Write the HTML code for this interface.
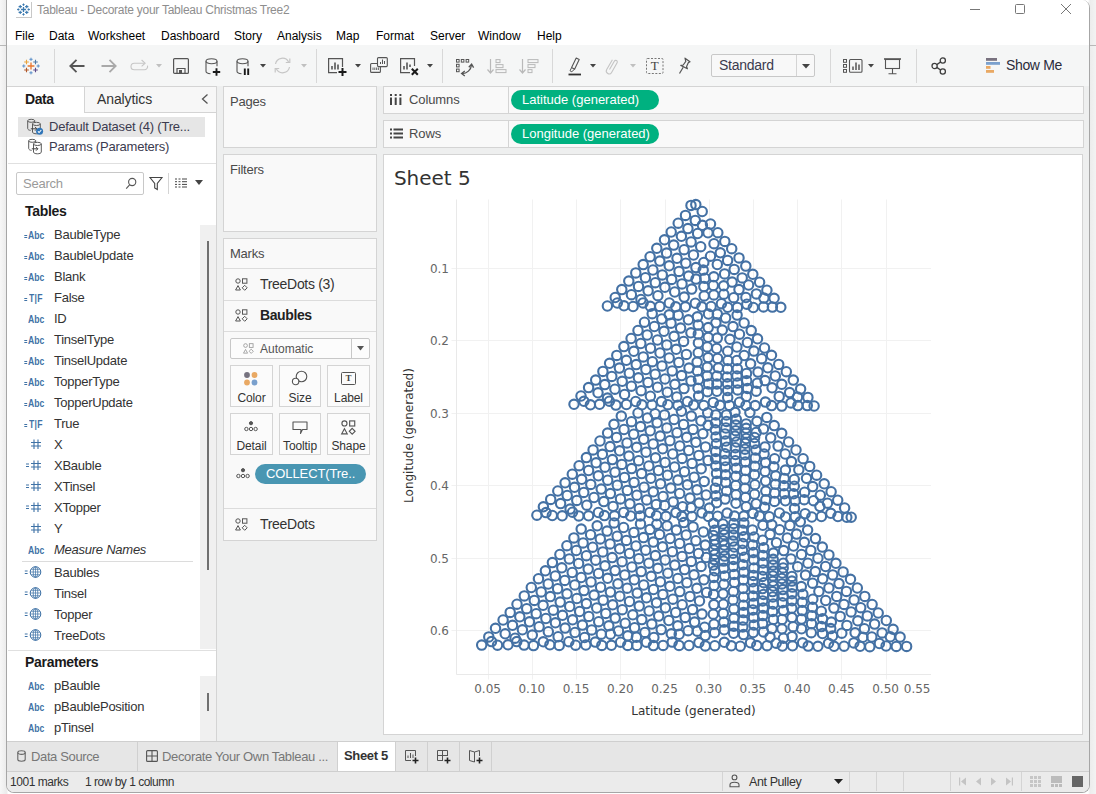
<!DOCTYPE html>
<html><head><meta charset="utf-8"><title>Tableau - Decorate your Tableau Christmas Tree2</title>
<style>
*{box-sizing:border-box;margin:0;padding:0}
html,body{width:1096px;height:794px;overflow:hidden}
body{background:linear-gradient(90deg,#f7f7f7 0,#ececec 6px,#ececec 7px,#fff 8px,#fff 1088px,#ececec 1090px,#f3f3f3 1096px);font-family:"Liberation Sans",sans-serif;font-size:13px;color:#333;position:relative}
#win{position:absolute;left:6px;top:0;width:1084px;height:793px;background:#fff;border:1px solid #a6a6a6;border-top:none;border-radius:0 8px 8px 8px;overflow:hidden}
#o{position:absolute;left:-7px;top:0;width:1096px;height:794px}
#o div,#o span{position:absolute;white-space:nowrap}
svg{position:absolute;overflow:visible}
.t{font-size:13px;color:#333;line-height:16px;letter-spacing:-.22px}
.card{background:#f9f9f9;border:1px solid #d4d4d4}
.f{font-size:13px;color:#333;line-height:16px;left:54px;letter-spacing:-.25px}
.ic{font-size:10.5px;font-weight:bold;color:#3f72a6;line-height:13px;transform:scaleX(.82);transform-origin:0 0}
</style></head><body>
<div style="position:absolute;left:0;top:45px;width:6px;height:1px;background:#b8b8b8"></div><div style="position:absolute;left:1090px;top:45px;width:6px;height:1px;background:#b8b8b8"></div>
<div id="win"><div id="o">
<!-- title + menu -->
<div style="left:7px;top:0;width:1082px;height:45px;background:#fff"></div>
<div style="left:37px;top:2px;font-size:12px;color:#8e8e8e;line-height:16px;letter-spacing:-.26px">Tableau - Decorate your Tableau Christmas Tree2</div>
<div style="left:16px;top:2px;width:16px;height:16px;background:#fff;border-right:1px solid #c8c8c8;border-bottom:1px solid #c8c8c8"></div>
<svg style="left:17px;top:3px" width="13" height="13" viewBox="0 0 13 13" fill="none"><path d="M6.5 4.04444v4.91111M4.04444 6.5h4.91111" stroke="#3c7ab0" stroke-width="1.3"/><path d="M3.25 1.95v3.32222M1.58889 3.61111h3.32222" stroke="#3c7ab0" stroke-width="1.1"/><path d="M9.75 1.95v3.32222M8.08889 3.61111h3.32222" stroke="#3c7ab0" stroke-width="1.1"/><path d="M3.25 7.72778v3.32222M1.58889 9.38889h3.32222" stroke="#3c7ab0" stroke-width="1.1"/><path d="M9.75 7.72778v3.32222M8.08889 9.38889h3.32222" stroke="#3c7ab0" stroke-width="1.1"/><path d="M6.5 0.505556v2.31111M5.34444 1.66111h2.31111" stroke="#3c7ab0" stroke-width="1"/><path d="M6.5 10.2556v2.31111M5.34444 11.4111h2.31111" stroke="#3c7ab0" stroke-width="1"/><path d="M1.3 5.34444v2.31111M0.144444 6.5h2.31111" stroke="#3c7ab0" stroke-width="1"/><path d="M11.7 5.34444v2.31111M10.5444 6.5h2.31111" stroke="#3c7ab0" stroke-width="1"/></svg>
<svg style="left:969px;top:4px" width="12" height="12" viewBox="0 0 12 12" ><path d="M1 5.500h10" stroke="#777" stroke-width="1"/></svg>
<svg style="left:1014px;top:3px" width="12" height="12" viewBox="0 0 12 12" ><rect x="1.500" y="1.500" width="9" height="9" rx="1" fill="none" stroke="#777" stroke-width="1"/></svg>
<svg style="left:1060px;top:3px" width="12" height="12" viewBox="0 0 12 12" ><path d="M1 1l10 10M11 1L1 11" stroke="#777" stroke-width="1"/></svg>
<div id="menu" style="left:0;top:28px;font-size:12px;color:#000;line-height:16px">
<span style="left:15px">File</span><span style="left:49px">Data</span><span style="left:88px">Worksheet</span><span style="left:161px">Dashboard</span><span style="left:234px">Story</span><span style="left:277px">Analysis</span><span style="left:336px">Map</span><span style="left:376px">Format</span><span style="left:430px">Server</span><span style="left:478px">Window</span><span style="left:537px">Help</span>
</div>
<!-- toolbar -->
<div style="left:7px;top:45px;width:1082px;height:41px;background:#f5f6f6"></div>
<svg style="left:21.5px;top:56.5px" width="18" height="18" viewBox="0 0 18 18" fill="none"><path d="M9 5.6v6.8M5.6 9h6.8" stroke="#e8762d" stroke-width="1.3"/><path d="M4.5 2.7v4.6M2.2 5h4.6" stroke="#e8a33d" stroke-width="1.1"/><path d="M13.5 2.7v4.6M11.2 5h4.6" stroke="#4e79a7" stroke-width="1.1"/><path d="M4.5 10.7v4.6M2.2 13h4.6" stroke="#b0582a" stroke-width="1.1"/><path d="M13.5 10.7v4.6M11.2 13h4.6" stroke="#5c4a8a" stroke-width="1.1"/><path d="M9 0.7v3.2M7.4 2.3h3.2" stroke="#5b8fc9" stroke-width="1"/><path d="M9 14.2v3.2M7.4 15.8h3.2" stroke="#5b8fc9" stroke-width="1"/><path d="M1.8 7.4v3.2M0.2 9h3.2" stroke="#5b8fc9" stroke-width="1"/><path d="M16.2 7.4v3.2M14.6 9h3.2" stroke="#5b8fc9" stroke-width="1"/></svg>
<div style="left:54px;top:49px;width:1px;height:34px;background:#d8d8d8"></div>
<div style="left:316px;top:49px;width:1px;height:34px;background:#d8d8d8"></div>
<div style="left:442px;top:49px;width:1px;height:34px;background:#d8d8d8"></div>
<div style="left:552px;top:49px;width:1px;height:34px;background:#d8d8d8"></div>
<div style="left:830px;top:49px;width:1px;height:34px;background:#d8d8d8"></div>
<div style="left:916px;top:49px;width:1px;height:34px;background:#d8d8d8"></div>
<svg style="left:68px;top:58px" width="18" height="16" viewBox="0 0 18 16" ><path d="M16.500 8H2.500M8.500 1.800L2.300 8l6.200 6.200" stroke="#555" stroke-width="1.800" fill="none"/></svg>
<svg style="left:100px;top:58px" width="18" height="16" viewBox="0 0 18 16" ><path d="M1.500 8h14M9.500 1.800L15.700 8l-6.200 6.200" stroke="#a9a9a9" stroke-width="1.800" fill="none"/></svg>
<svg style="left:129px;top:58px" width="20" height="12" viewBox="0 0 20 12" ><path d="M15 5.200H5.300a3.300 3.300 0 0 0 0 6.600h10a3.300 3.300 0 0 0 3.200-4.200" stroke="#c6c6c6" stroke-width="1.100" fill="none"/><path d="M12.600 2l3.500 3.200-3.500 3.200" stroke="#c6c6c6" stroke-width="1.100" fill="none"/></svg>
<svg style="left:156px;top:64px" width="6" height="4" viewBox="0 0 6 4" ><path d="M0 0h6L3 3.600z" fill="#c0c0c0"/></svg>
<svg style="left:173px;top:58px" width="16" height="16" viewBox="0 0 16 16" ><rect x=".6" y=".6" width="14.800" height="14.800" rx="1" fill="none" stroke="#555" stroke-width="1.200"/><path d="M4 15.400V10.500h8v4.900" fill="none" stroke="#555" stroke-width="1.200"/><rect x="6" y="12" width="3" height="3.400" fill="#555"/></svg>
<svg style="left:205px;top:58px" width="18" height="19" viewBox="0 0 18 19" ><ellipse cx="6.500" cy="3.200" rx="5.500" ry="2.500" fill="none" stroke="#555" stroke-width="1.100"/><path d="M1 3.200v10c0 1.300 2 2.300 4.500 2.500M12 3.200v5" fill="none" stroke="#555" stroke-width="1.100"/><path d="M11.5 10.3v7.4M7.8 14h7.4" stroke="#1a1a1a" stroke-width="1.9" fill="none"/></svg>
<svg style="left:236px;top:58px" width="18" height="19" viewBox="0 0 18 19" ><ellipse cx="6.500" cy="3.200" rx="5.500" ry="2.500" fill="none" stroke="#555" stroke-width="1.100"/><path d="M1 3.200v10c0 1.300 2 2.300 4.500 2.500M12 3.200v5" fill="none" stroke="#555" stroke-width="1.100"/><path d="M8.800 10.500v6.500M12.200 10.500v6.500" stroke="#1a1a1a" stroke-width="1.900"/></svg>
<svg style="left:260px;top:64px" width="6" height="4" viewBox="0 0 6 4" ><path d="M0 0h6L3 3.600z" fill="#444"/></svg>
<svg style="left:273px;top:56px" width="19" height="19" viewBox="0 0 19 19" ><path d="M2.500 8A7 7 0 0 1 15.600 6M16.500 11A7 7 0 0 1 3.400 13" fill="none" stroke="#c6c6c6" stroke-width="1.200"/><path d="M16.800 2.500v4h-4M2.200 16.500v-4h4" fill="none" stroke="#c6c6c6" stroke-width="1.200"/></svg>
<svg style="left:300.5px;top:64px" width="6" height="4" viewBox="0 0 6 4" ><path d="M0 0h6L3 3.600z" fill="#c0c0c0"/></svg>
<svg style="left:328px;top:58px" width="20" height="19" viewBox="0 0 20 19" ><path d="M14.500 9V.6H.6v14H9" fill="none" stroke="#555" stroke-width="1.200"/><path d="M4 11.500V8M7 11.500V4.500M10 11.500V6.500" stroke="#555" stroke-width="1.600"/><path d="M14.5 10v8M10.5 14h8" stroke="#1a1a1a" stroke-width="2" fill="none"/></svg>
<svg style="left:354.5px;top:64px" width="6" height="4" viewBox="0 0 6 4" ><path d="M0 0h6L3 3.600z" fill="#444"/></svg>
<svg style="left:370px;top:57px" width="18" height="17" viewBox="0 0 18 17" ><rect x="7.500" y=".6" width="9.800" height="9" rx="1" fill="#f5f6f6" stroke="#555" stroke-width="1.100"/><path d="M10.500 7V5M12.500 7V2.500M14.500 7V4" stroke="#555" stroke-width="1"/><path d="M7.500 6.500H1.600a1 1 0 0 0-1 1V14.400a1 1 0 0 0 1 1H9.400a1 1 0 0 0 1-1V9.600" fill="none" stroke="#555" stroke-width="1.100"/><path d="M3 13v-2.500M4.800 13v-2.500M6.600 13v-2.500M8.400 13v-2.500" stroke="#555" stroke-width=".9"/></svg>
<svg style="left:400px;top:58px" width="20" height="19" viewBox="0 0 20 19" ><path d="M14.500 8V.6H.6v14H10" fill="none" stroke="#555" stroke-width="1.200"/><path d="M4 11.500V8M7 11.500V4.500M10 9V6.500" stroke="#555" stroke-width="1.600"/><path d="M11.800 10.800l6 6M17.800 10.800l-6 6" stroke="#1a1a1a" stroke-width="2"/></svg>
<svg style="left:426.5px;top:64px" width="6" height="4" viewBox="0 0 6 4" ><path d="M0 0h6L3 3.600z" fill="#444"/></svg>
<svg style="left:455.5px;top:59px" width="18" height="17" viewBox="0 0 18 17" ><rect x="0.5" y="0.5" width="2.600" height="2.600" fill="none" stroke="#555" stroke-width="1"/><rect x="5.3" y="0.5" width="2.600" height="2.600" fill="none" stroke="#555" stroke-width="1"/><rect x="10.1" y="0.5" width="2.600" height="2.600" fill="none" stroke="#555" stroke-width="1"/><rect x="0.5" y="5.3" width="2.600" height="2.600" fill="none" stroke="#555" stroke-width="1"/><rect x="0.5" y="10.1" width="2.600" height="2.600" fill="none" stroke="#555" stroke-width="1"/><path d="M6 14.500c5 0 9-3.500 9.500-8.500" fill="none" stroke="#555" stroke-width="1.300"/><path d="M12.800 8.200L15.600 5.200l2 3.400M8.800 12l-3.200 2.500 3.200 2.400" fill="none" stroke="#555" stroke-width="1.300"/></svg>
<svg style="left:487px;top:59px" width="20" height="16" viewBox="0 0 20 16" ><path d="M3.500 0v14M.5 10.500l3 3.500 3-3.500" fill="none" stroke="#b9b9b9" stroke-width="1.200"/><rect x="9" y=".6" width="4" height="3" fill="none" stroke="#b9b9b9"/><rect x="9" y="5.600" width="7" height="3" fill="none" stroke="#b9b9b9"/><rect x="9" y="10.600" width="10" height="3" fill="none" stroke="#b9b9b9"/></svg>
<svg style="left:519px;top:59px" width="20" height="16" viewBox="0 0 20 16" ><path d="M3.500 0v14M.5 10.500l3 3.500 3-3.500" fill="none" stroke="#b9b9b9" stroke-width="1.200"/><rect x="9" y=".6" width="10" height="3" fill="none" stroke="#b9b9b9"/><rect x="9" y="5.600" width="7" height="3" fill="none" stroke="#b9b9b9"/><rect x="9" y="10.600" width="4" height="3" fill="none" stroke="#b9b9b9"/></svg>
<svg style="left:568px;top:57px" width="14" height="19" viewBox="0 0 14 19" ><path d="M8.200 1l3 1.600-4.600 9.600-3-1.600z" fill="none" stroke="#555" stroke-width="1.100" stroke-linejoin="round"/><path d="M3.600 10.600l-1.600 3.200 1.800 .9 2.800-2.500" fill="none" stroke="#555" stroke-width="1"/><path d="M.5 17.500h12.500" stroke="#333" stroke-width="1.800"/></svg>
<svg style="left:589.5px;top:64px" width="6" height="4" viewBox="0 0 6 4" ><path d="M0 0h6L3 3.600z" fill="#444"/></svg>
<svg style="left:605px;top:57px" width="15" height="18" viewBox="0 0 15 18" ><path d="M4.500 12.500l4.800-8.300a1.600 1.600 0 0 1 2.800 1.600l-5.500 9.600a2.800 2.800 0 0 1-4.900-2.800l5.700-9.800" fill="none" stroke="#c4c4c4" stroke-width="1.100"/></svg>
<svg style="left:629.5px;top:64px" width="6" height="4" viewBox="0 0 6 4" ><path d="M0 0h6L3 3.600z" fill="#c0c0c0"/></svg>
<svg style="left:646px;top:57.5px" width="18" height="16" viewBox="0 0 18 16" ><rect x=".5" y=".5" width="16.500" height="15" rx="1" fill="none" stroke="#777" stroke-width="1" stroke-dasharray="2 1.500"/></svg>
<div style="left:646px;top:58px;width:17.500px;text-align:center;font-family:'Liberation Serif',serif;font-size:13px;line-height:16px;color:#444">T</div>
<svg style="left:677px;top:57px" width="15" height="19" viewBox="0 0 15 19" ><path d="M8 1.200l5 3.600-1.600 .8-1.800 4 .8 2.200-6.600-3.400 2.400-.4 2.600-3.600z" fill="none" stroke="#555" stroke-width="1.200" stroke-linejoin="round"/><path d="M6.200 10.200L2.500 16.500" stroke="#555" stroke-width="1.200"/></svg>
<div style="left:711px;top:54px;width:104px;height:23px;background:#f8f8f8;border:1px solid #c8c8c8;border-radius:2px"></div>
<div style="left:796px;top:55px;width:1px;height:21px;background:#d4d4d4"></div>
<div style="left:719px;top:57px;font-size:14px;line-height:17px;color:#3b3b4f;letter-spacing:-.25px">Standard</div>
<svg style="left:801.5px;top:63.5px" width="8" height="5" viewBox="0 0 8 5" ><path d="M0 0h8L4 4.600z" fill="#444"/></svg>
<svg style="left:843px;top:59px" width="20" height="14" viewBox="0 0 20 14" ><rect x=".5" y=".5" width="3" height="2.800" fill="none" stroke="#555"/><rect x=".5" y="5.500" width="3" height="2.800" fill="none" stroke="#555"/><rect x=".5" y="10.500" width="3" height="2.800" fill="none" stroke="#555"/><rect x="6.500" y=".5" width="12.500" height="12.800" rx="1" fill="none" stroke="#555" stroke-width="1.100"/><path d="M10 11V7.500M13 11V3.500M16 11V5.500" stroke="#555" stroke-width="1.500"/></svg>
<svg style="left:867.5px;top:64px" width="6" height="4" viewBox="0 0 6 4" ><path d="M0 0h6L3 3.600z" fill="#444"/></svg>
<svg style="left:884px;top:58px" width="17" height="17" viewBox="0 0 17 17" ><path d="M0 1h17" stroke="#555" stroke-width="1.600"/><rect x="1.500" y="1.500" width="14" height="9" fill="none" stroke="#555" stroke-width="1.100"/><path d="M8.500 10.500v5M4.500 15.800h8" stroke="#555" stroke-width="1.100"/></svg>
<svg style="left:931px;top:57px" width="16" height="18" viewBox="0 0 16 18" ><circle cx="11.800" cy="3.500" r="2.600" fill="none" stroke="#3d3d3d" stroke-width="1.300"/><circle cx="3.600" cy="9" r="2.600" fill="none" stroke="#3d3d3d" stroke-width="1.300"/><circle cx="11.800" cy="14.500" r="2.600" fill="none" stroke="#3d3d3d" stroke-width="1.300"/><path d="M5.800 7.600l3.800-2.600M5.800 10.400l3.800 2.600" stroke="#3d3d3d" stroke-width="1.300"/></svg>
<svg style="left:986px;top:58px" width="15" height="15" viewBox="0 0 15 15" ><rect x="0" y="0" width="11" height="2.800" fill="#79727f"/><rect x="0" y="4" width="14" height="2.800" fill="#7aa0cd"/><rect x="0" y="8" width="4.500" height="2.800" fill="#e9a964"/><rect x="0" y="12" width="8" height="2.800" fill="#e9a964"/></svg>
<div style="left:1006px;top:57px;font-size:14px;line-height:17px;color:#2b2b3b;letter-spacing:-.35px">Show Me</div>
<!-- workspace -->
<div style="left:7px;top:86px;width:1082px;height:655px;background:#eeefef"></div>
<div style="left:7px;top:86px;width:210px;height:655px;background:#fff;border-top:1px solid #d4d4d4;border-right:1px solid #d4d4d4"></div>
<div style="left:84px;top:86px;width:133px;height:27px;background:#f7f7f7;border:1px solid #d4d4d4"></div>
<div style="left:25px;top:91px;font-size:14px;font-weight:bold;color:#1a1a1a;line-height:17px;letter-spacing:-.4px">Data</div>
<div style="left:97px;top:91px;font-size:14px;color:#333;line-height:17px;letter-spacing:-.1px">Analytics</div>
<svg style="left:200px;top:93px" width="10" height="12" viewBox="0 0 10 12" fill="none" stroke="#555" stroke-width="1.3"><path d="M7.5 1.5L2.5 6l5 4.5"/></svg>
<div style="left:18px;top:117px;width:187px;height:20px;background:#e6e6e6"></div>
<div class="t" style="left:49px;top:119px;color:#3b3b4f">Default Dataset (4) (Tre...</div>
<div class="t" style="left:49px;top:139px;color:#3b3b4f">Params (Parameters)</div>
<svg style="left:26px;top:117px" width="18" height="18" viewBox="0 0 18 18" fill="none" stroke="#5a5a5a" stroke-width="1"><ellipse cx="5.200" cy="3.800" rx="3.500" ry="1.500"/><path d="M1.700 3.800v7.700c0 1 1.200 1.700 2.900 1.900M8.700 3.800v1.400"/><ellipse cx="10.400" cy="6.900" rx="3.900" ry="1.600"/><path d="M6.500 6.900v8.200c0 1 1.800 1.700 3.900 1.700s3.900-.7 3.900-1.700V6.900"/><path d="M4.800 11.800h6M9 9.900l1.900 1.900L9 13.700" stroke="#444"/><circle cx="13.600" cy="14.200" r="3.500" fill="#2f75b8" stroke="none"/><path d="M11.900 14.300l1.200 1.200 2.200-2.500" stroke="#fff" stroke-width="1.100"/></svg>
<svg style="left:27px;top:137px" width="18" height="18" viewBox="0 0 18 18" fill="none" stroke="#5a5a5a" stroke-width="1"><ellipse cx="5.200" cy="3.800" rx="3.500" ry="1.500"/><path d="M1.700 3.800v7.700c0 1 1.200 1.700 2.900 1.900M8.700 3.800v1.400"/><ellipse cx="10.400" cy="6.900" rx="3.900" ry="1.600"/><path d="M6.500 6.900v8.200c0 1 1.800 1.700 3.900 1.700s3.900-.7 3.900-1.700V6.900"/><path d="M4.800 11.800h6M9 9.900l1.900 1.900L9 13.700" stroke="#444"/></svg>
<div style="left:8px;top:163px;width:208px;height:1px;background:#e0e0e0"></div>
<div style="left:16px;top:172px;width:128px;height:23px;background:#fff;border:1px solid #c8c8c8;border-radius:2px"></div>
<div class="t" style="left:23px;top:176px;color:#9a9a9a">Search</div>
<svg style="left:125px;top:177px" width="12" height="13" viewBox="0 0 12 13" fill="none" stroke="#555" stroke-width="1.1"><circle cx="7.2" cy="5" r="3.6"/><path d="M4.6 7.8L1.2 11.6"/></svg>
<svg style="left:149px;top:176px" width="14" height="15" viewBox="0 0 14 15" fill="none" stroke="#444" stroke-width="1.1"><path d="M1 1.5h12L8.3 7.5v6l-2.6-1.6V7.5z"/></svg>
<div style="left:168px;top:173px;width:1px;height:21px;background:#d4d4d4"></div>
<svg style="left:174px;top:178px" width="14" height="10" viewBox="0 0 14 10" fill="none" stroke="#444" stroke-width="1"><path d="M1 1h2M4.5 1h2M8 1h5M1 3.7h2M4.5 3.7h2M8 3.7h5M1 6.4h2M4.5 6.4h2M8 6.4h5M1 9h2M4.5 9h2M8 9h5"/></svg>
<svg style="left:195px;top:180px" width="8" height="5" viewBox="0 0 8 5"><path d="M0 0h8L4 5z" fill="#444"/></svg>
<div style="left:25px;top:203px;font-size:14px;font-weight:bold;color:#1a1a1a;line-height:17px;letter-spacing:-.3px">Tables</div>
<svg style="left:24px;top:234px" width="4" height="5" viewBox="0 0 4 5"><path d="M.3 1.500h2.900M.3 3.500h2.900" stroke="#3f72a6" stroke-width="1"/></svg><div class="ic" style="left:28px;top:229px">Abc</div><div class="f" style="left:54px;top:227px">BaubleType</div>
<svg style="left:24px;top:255px" width="4" height="5" viewBox="0 0 4 5"><path d="M.3 1.500h2.900M.3 3.500h2.900" stroke="#3f72a6" stroke-width="1"/></svg><div class="ic" style="left:28px;top:250px">Abc</div><div class="f" style="left:54px;top:248px">BaubleUpdate</div>
<svg style="left:24px;top:276px" width="4" height="5" viewBox="0 0 4 5"><path d="M.3 1.500h2.900M.3 3.500h2.900" stroke="#3f72a6" stroke-width="1"/></svg><div class="ic" style="left:28px;top:271px">Abc</div><div class="f" style="left:54px;top:269px">Blank</div>
<svg style="left:24px;top:297px" width="4" height="5" viewBox="0 0 4 5"><path d="M.3 1.500h2.900M.3 3.500h2.900" stroke="#3f72a6" stroke-width="1"/></svg><div class="ic" style="left:28.500px;top:292px;font-weight:bold;letter-spacing:.3px">T|F</div><div class="f" style="left:54px;top:290px">False</div>
<div class="ic" style="left:28px;top:313px">Abc</div><div class="f" style="left:54px;top:311px">ID</div>
<svg style="left:24px;top:339px" width="4" height="5" viewBox="0 0 4 5"><path d="M.3 1.500h2.900M.3 3.500h2.900" stroke="#3f72a6" stroke-width="1"/></svg><div class="ic" style="left:28px;top:334px">Abc</div><div class="f" style="left:54px;top:332px">TinselType</div>
<svg style="left:24px;top:360px" width="4" height="5" viewBox="0 0 4 5"><path d="M.3 1.500h2.900M.3 3.500h2.900" stroke="#3f72a6" stroke-width="1"/></svg><div class="ic" style="left:28px;top:355px">Abc</div><div class="f" style="left:54px;top:353px">TinselUpdate</div>
<svg style="left:24px;top:381px" width="4" height="5" viewBox="0 0 4 5"><path d="M.3 1.500h2.900M.3 3.500h2.900" stroke="#3f72a6" stroke-width="1"/></svg><div class="ic" style="left:28px;top:376px">Abc</div><div class="f" style="left:54px;top:374px">TopperType</div>
<svg style="left:24px;top:402px" width="4" height="5" viewBox="0 0 4 5"><path d="M.3 1.500h2.900M.3 3.500h2.900" stroke="#3f72a6" stroke-width="1"/></svg><div class="ic" style="left:28px;top:397px">Abc</div><div class="f" style="left:54px;top:395px">TopperUpdate</div>
<svg style="left:24px;top:423px" width="4" height="5" viewBox="0 0 4 5"><path d="M.3 1.500h2.900M.3 3.500h2.900" stroke="#3f72a6" stroke-width="1"/></svg><div class="ic" style="left:28.500px;top:418px;font-weight:bold;letter-spacing:.3px">T|F</div><div class="f" style="left:54px;top:416px">True</div>
<svg style="left:24px;top:438px" width="20" height="12" viewBox="0 0 20 12" fill="none" stroke="#3f72a6" stroke-width="1.1"><path d="M10 1.5v9.5M14 1.5v9.5M7 4.5h10M7 8h10"/></svg><div class="f" style="left:54px;top:437px">X</div>
<svg style="left:24px;top:459px" width="20" height="12" viewBox="0 0 20 12" fill="none" stroke="#3f72a6" stroke-width="1.1"><path d="M2 5h3M2 7.5h3" stroke-width="1"/><path d="M10 1.5v9.5M14 1.5v9.5M7 4.5h10M7 8h10"/></svg><div class="f" style="left:54px;top:458px">XBauble</div>
<svg style="left:24px;top:480px" width="20" height="12" viewBox="0 0 20 12" fill="none" stroke="#3f72a6" stroke-width="1.1"><path d="M2 5h3M2 7.5h3" stroke-width="1"/><path d="M10 1.5v9.5M14 1.5v9.5M7 4.5h10M7 8h10"/></svg><div class="f" style="left:54px;top:479px">XTinsel</div>
<svg style="left:24px;top:501px" width="20" height="12" viewBox="0 0 20 12" fill="none" stroke="#3f72a6" stroke-width="1.1"><path d="M2 5h3M2 7.5h3" stroke-width="1"/><path d="M10 1.5v9.5M14 1.5v9.5M7 4.5h10M7 8h10"/></svg><div class="f" style="left:54px;top:500px">XTopper</div>
<svg style="left:24px;top:522px" width="20" height="12" viewBox="0 0 20 12" fill="none" stroke="#3f72a6" stroke-width="1.1"><path d="M10 1.5v9.5M14 1.5v9.5M7 4.5h10M7 8h10"/></svg><div class="f" style="left:54px;top:521px">Y</div>
<div class="ic" style="left:28px;top:544px">Abc</div><div class="f" style="font-style:italic;left:54px;top:542px">Measure Names</div>
<div style="left:22px;top:561px;width:171px;height:1px;background:#dcdcdc"></div>
<svg style="left:24px;top:565px" width="20" height="14" viewBox="0 0 20 14" fill="none" stroke="#3f72a6" stroke-width="1"><path d="M.8 6h2.800M.8 8.500h2.800"/><circle cx="11.500" cy="7" r="5.300"/><ellipse cx="11.500" cy="7" rx="2.300" ry="5.300" stroke-width=".8"/><path d="M6.200 7h10.600M11.500 1.700v10.600M7.200 4.300h8.600M7.200 9.700h8.600" stroke-width=".7"/></svg><div class="f" style="left:54px;top:565px">Baubles</div>
<svg style="left:24px;top:586px" width="20" height="14" viewBox="0 0 20 14" fill="none" stroke="#3f72a6" stroke-width="1"><path d="M.8 6h2.800M.8 8.500h2.800"/><circle cx="11.500" cy="7" r="5.300"/><ellipse cx="11.500" cy="7" rx="2.300" ry="5.300" stroke-width=".8"/><path d="M6.200 7h10.600M11.500 1.700v10.600M7.200 4.300h8.600M7.200 9.700h8.600" stroke-width=".7"/></svg><div class="f" style="left:54px;top:586px">Tinsel</div>
<svg style="left:24px;top:607px" width="20" height="14" viewBox="0 0 20 14" fill="none" stroke="#3f72a6" stroke-width="1"><path d="M.8 6h2.800M.8 8.500h2.800"/><circle cx="11.500" cy="7" r="5.300"/><ellipse cx="11.500" cy="7" rx="2.300" ry="5.300" stroke-width=".8"/><path d="M6.200 7h10.600M11.500 1.700v10.600M7.200 4.300h8.600M7.200 9.700h8.600" stroke-width=".7"/></svg><div class="f" style="left:54px;top:607px">Topper</div>
<svg style="left:24px;top:628px" width="20" height="14" viewBox="0 0 20 14" fill="none" stroke="#3f72a6" stroke-width="1"><path d="M.8 6h2.800M.8 8.500h2.800"/><circle cx="11.500" cy="7" r="5.300"/><ellipse cx="11.500" cy="7" rx="2.300" ry="5.300" stroke-width=".8"/><path d="M6.200 7h10.600M11.500 1.700v10.600M7.200 4.300h8.600M7.200 9.700h8.600" stroke-width=".7"/></svg><div class="f" style="left:54px;top:628px">TreeDots</div>
<div style="left:200px;top:225px;width:16px;height:424px;background:#f0f0f0"></div>
<div style="left:207px;top:241px;width:2px;height:329px;background:#707070"></div>
<div style="left:8px;top:650px;width:208px;height:1px;background:#e0e0e0"></div>
<div style="left:25px;top:654px;font-size:14px;font-weight:bold;color:#1a1a1a;line-height:17px;letter-spacing:-.3px">Parameters</div>
<div class="ic" style="left:28px;top:680px">Abc</div><div class="f" style="left:54px;top:678px">pBauble</div>
<div class="ic" style="left:28px;top:701px">Abc</div><div class="f" style="left:54px;top:699px">pBaublePosition</div>
<div class="ic" style="left:28px;top:722px">Abc</div><div class="f" style="left:54px;top:720px">pTinsel</div>
<div style="left:200px;top:676px;width:16px;height:65px;background:#f0f0f0"></div>
<div style="left:207px;top:693px;width:2px;height:18px;background:#707070"></div>
<div class="card" style="left:223px;top:86px;width:154px;height:62px"></div>
<div class="t" style="left:230px;top:94px;color:#4a4a4a">Pages</div>
<div class="card" style="left:223px;top:154px;width:154px;height:78px"></div>
<div class="t" style="left:230px;top:162px;color:#4a4a4a">Filters</div>
<div class="card" style="left:223px;top:238px;width:154px;height:303px"></div>
<div class="t" style="left:230px;top:246px;color:#4a4a4a">Marks</div>
<div style="left:224px;top:268px;width:152px;height:1px;background:#dcdcdc"></div>
<div style="left:224px;top:300px;width:152px;height:1px;background:#dcdcdc"></div>
<div style="left:224px;top:331px;width:152px;height:1px;background:#dcdcdc"></div>
<div style="left:224px;top:508px;width:152px;height:1px;background:#dcdcdc"></div>
<svg style="left:235px;top:278px" width="13" height="13" viewBox="0 0 13 13" fill="none" stroke="#555" stroke-width="1"><circle cx="3" cy="3" r="2.2"/><rect x="7.5" y="0.8" width="4.4" height="4.4"/><path d="M3 7.6L5.4 12H.6z"/><path d="M9.7 7.3l2.5 2.5-2.5 2.5-2.5-2.5z"/></svg>
<div class="t" style="left:260px;top:276px;font-size:14px;letter-spacing:-.3px">TreeDots (3)</div>
<svg style="left:235px;top:309px" width="13" height="13" viewBox="0 0 13 13" fill="none" stroke="#555" stroke-width="1"><circle cx="3" cy="3" r="2.2"/><rect x="7.5" y="0.8" width="4.4" height="4.4"/><path d="M3 7.6L5.4 12H.6z"/><path d="M9.7 7.3l2.5 2.5-2.5 2.5-2.5-2.5z"/></svg>
<div class="t" style="left:260px;top:307px;font-size:14px;font-weight:bold;color:#222;letter-spacing:-.4px">Baubles</div>
<svg style="left:235px;top:518px" width="13" height="13" viewBox="0 0 13 13" fill="none" stroke="#555" stroke-width="1"><circle cx="3" cy="3" r="2.2"/><rect x="7.5" y="0.8" width="4.4" height="4.4"/><path d="M3 7.6L5.4 12H.6z"/><path d="M9.7 7.3l2.5 2.5-2.5 2.5-2.5-2.5z"/></svg>
<div class="t" style="left:260px;top:516px;font-size:14px;letter-spacing:-.3px">TreeDots</div>
<div style="left:230px;top:338px;width:140px;height:21px;background:#fcfcfc;border:1px solid #c8c8c8;border-radius:2px"></div>
<div style="left:351px;top:339px;width:1px;height:19px;background:#c8c8c8"></div>
<svg style="left:243px;top:343px" width="11" height="11" viewBox="0 0 13 13" fill="none" stroke="#999" stroke-width="1"><circle cx="3" cy="3" r="2.2"/><rect x="7.5" y="0.8" width="4.4" height="4.4"/><path d="M3 7.6L5.4 12H.6z"/><path d="M9.7 7.3l2.5 2.5-2.5 2.5-2.5-2.5z"/></svg>
<div class="t" style="left:260px;top:341px;color:#555;font-size:12px;letter-spacing:0">Automatic</div>
<svg style="left:357px;top:346px" width="7" height="5" viewBox="0 0 7 5"><path d="M0 0h7L3.500 4.500z" fill="#555"/></svg>
<div style="left:230px;top:365px;width:43px;height:42px;background:#fbfbfb;border:1px solid #d4d4d4"></div>
<div class="t" style="left:230px;top:390px;width:43px;text-align:center;font-size:12px;letter-spacing:-.1px;color:#333">Color</div>
<div style="left:279px;top:365px;width:42px;height:42px;background:#fbfbfb;border:1px solid #d4d4d4"></div>
<div class="t" style="left:279px;top:390px;width:42px;text-align:center;font-size:12px;letter-spacing:-.1px;color:#333">Size</div>
<div style="left:327px;top:365px;width:43px;height:42px;background:#fbfbfb;border:1px solid #d4d4d4"></div>
<div class="t" style="left:327px;top:390px;width:43px;text-align:center;font-size:12px;letter-spacing:-.1px;color:#333">Label</div>
<div style="left:230px;top:413px;width:43px;height:42px;background:#fbfbfb;border:1px solid #d4d4d4"></div>
<div class="t" style="left:230px;top:438px;width:43px;text-align:center;font-size:12px;letter-spacing:-.1px;color:#333">Detail</div>
<div style="left:279px;top:413px;width:42px;height:42px;background:#fbfbfb;border:1px solid #d4d4d4"></div>
<div class="t" style="left:279px;top:438px;width:42px;text-align:center;font-size:12px;letter-spacing:-.1px;color:#333">Tooltip</div>
<div style="left:327px;top:413px;width:43px;height:42px;background:#fbfbfb;border:1px solid #d4d4d4"></div>
<div class="t" style="left:327px;top:438px;width:43px;text-align:center;font-size:12px;letter-spacing:-.1px;color:#333">Shape</div>
<svg style="left:243px;top:371px" width="16" height="16" viewBox="0 0 16 16"><circle cx="4" cy="4" r="2.9" fill="#76727f"/><circle cx="11.5" cy="4" r="2.9" fill="#e9a964"/><circle cx="4" cy="11.5" r="2.9" fill="#e9a964"/><circle cx="11.5" cy="11.5" r="2.9" fill="#7aa0cd"/></svg>
<svg style="left:291px;top:370px" width="18" height="17" viewBox="0 0 18 17" fill="none" stroke="#555" stroke-width="1.1"><circle cx="10.5" cy="6.5" r="5.3"/><circle cx="4.6" cy="11.5" r="3.2" fill="#fbfbfb"/></svg>
<svg style="left:341px;top:372px" width="15" height="13" viewBox="0 0 15 13" fill="none" stroke="#555" stroke-width="1"><rect x=".5" y=".5" width="14" height="12" rx="1"/></svg>
<div style="left:341px;top:372px;width:15px;text-align:center;font-family:'Liberation Serif',serif;font-size:9px;font-weight:bold;line-height:13px;color:#444">T</div>
<svg style="left:244px;top:421px" width="14" height="11" viewBox="0 0 14 11" fill="none" stroke="#555" stroke-width="1"><circle cx="7" cy="2.2" r="1.6" fill="#555"/><circle cx="2.4" cy="8" r="1.7"/><circle cx="7" cy="8" r="1.7"/><circle cx="11.6" cy="8" r="1.7"/></svg>
<svg style="left:292px;top:421px" width="16" height="14" viewBox="0 0 16 14" fill="none" stroke="#555" stroke-width="1.1"><path d="M1 1h14v7.5H10.5L8.5 12.5 9 8.5H1z" stroke-linejoin="round"/></svg>
<svg style="left:341px;top:420px" width="15" height="15" viewBox="0 0 13 13" fill="none" stroke="#555" stroke-width="1"><circle cx="3" cy="3" r="2.2"/><rect x="7.5" y="0.8" width="4.4" height="4.4"/><path d="M3 7.6L5.4 12H.6z"/><path d="M9.7 7.3l2.5 2.5-2.5 2.5-2.5-2.5z"/></svg>
<svg style="left:236px;top:468px" width="14" height="11" viewBox="0 0 14 11" fill="none" stroke="#555" stroke-width="1"><circle cx="7" cy="2.2" r="1.6" fill="#555"/><circle cx="2.4" cy="8" r="1.7"/><circle cx="7" cy="8" r="1.7"/><circle cx="11.6" cy="8" r="1.7"/></svg>
<div style="left:255px;top:464px;width:111px;height:20px;background:#4996b2;border-radius:10px"></div>
<div class="t" style="left:266px;top:466px;color:#fff;letter-spacing:-.1px">COLLECT(Tre..</div>
<div class="card" style="left:383px;top:86px;width:701px;height:28px"></div>
<div style="left:508px;top:87px;width:1px;height:26px;background:#d4d4d4"></div>
<div class="t" style="left:409px;top:92px;color:#4a4a4a;letter-spacing:-.1px">Columns</div>
<div style="left:511px;top:90px;width:148px;height:20px;background:#00b180;border-radius:10px"></div>
<div class="t" style="left:522px;top:92px;color:#fff;letter-spacing:0">Latitude (generated)</div>
<div class="card" style="left:383px;top:120px;width:701px;height:28px"></div>
<div style="left:508px;top:121px;width:1px;height:26px;background:#d4d4d4"></div>
<div class="t" style="left:409px;top:126px;color:#4a4a4a;letter-spacing:-.1px">Rows</div>
<div style="left:511px;top:124px;width:148px;height:20px;background:#00b180;border-radius:10px"></div>
<div class="t" style="left:522px;top:126px;color:#fff;letter-spacing:0">Longitude (generated)</div>
<svg style="left:390px;top:94px" width="12" height="11" viewBox="0 0 12 11" fill="#444"><rect x="0" y="0" width="2" height="2"/><rect x="0" y="3.5" width="2" height="7.5"/><rect x="4.7" y="0" width="2" height="2"/><rect x="4.7" y="3.5" width="2" height="7.5"/><rect x="9.4" y="0" width="2" height="2"/><rect x="9.4" y="3.5" width="2" height="7.5"/></svg>
<svg style="left:390px;top:128px" width="13" height="11" viewBox="0 0 13 11" fill="#444"><rect x="0" y="0.5" width="2" height="2"/><rect x="3.5" y="0.5" width="9.5" height="2"/><rect x="0" y="4.5" width="2" height="2"/><rect x="3.5" y="4.5" width="9.5" height="2"/><rect x="0" y="8.5" width="2" height="2"/><rect x="3.5" y="8.5" width="9.5" height="2"/></svg>
<div id="viz" style="left:383px;top:154px;width:700px;height:581px;background:#fff;border:1px solid #d4d4d4"></div>
<svg width="700" height="582" style="left:383px;top:154px" viewBox="0 0 700 582">
 <path d="M105.5 45.5V525.5M149.5 45.5V525.5M193.5 45.5V525.5M237.5 45.5V525.5M282.5 45.5V525.5M326.5 45.5V525.5M370.5 45.5V525.5M414.5 45.5V525.5M458.5 45.5V525.5M503.5 45.5V525.5M68.5 114.5H548.0M68.5 186.5H548.0M68.5 259.5H548.0M68.5 331.5H548.0M68.5 404.5H548.0M68.5 476.5H548.0" stroke="#f1f1f1" stroke-width="1" fill="none"/>
<path d="M73.5 45.5V520.5H548.0" stroke="#e9e9e9" stroke-width="1" fill="none"/>
<text x="10.9" y="31.2" style="font-family:'DejaVu Sans',sans-serif;font-size:20px" fill="#333">Sheet 5</text>
<text x="66.0" y="119.0" text-anchor="end" style="font-family:'DejaVu Sans',sans-serif;font-size:12px" fill="#666">0.1</text>
<text x="66.0" y="191.4" text-anchor="end" style="font-family:'DejaVu Sans',sans-serif;font-size:12px" fill="#666">0.2</text>
<text x="66.0" y="263.8" text-anchor="end" style="font-family:'DejaVu Sans',sans-serif;font-size:12px" fill="#666">0.3</text>
<text x="66.0" y="336.2" text-anchor="end" style="font-family:'DejaVu Sans',sans-serif;font-size:12px" fill="#666">0.4</text>
<text x="66.0" y="408.6" text-anchor="end" style="font-family:'DejaVu Sans',sans-serif;font-size:12px" fill="#666">0.5</text>
<text x="66.0" y="481.0" text-anchor="end" style="font-family:'DejaVu Sans',sans-serif;font-size:12px" fill="#666">0.6</text>
<text x="104.6" y="539.2" text-anchor="middle" style="font-family:'DejaVu Sans',sans-serif;font-size:12px" fill="#666">0.05</text>
<text x="148.8" y="539.2" text-anchor="middle" style="font-family:'DejaVu Sans',sans-serif;font-size:12px" fill="#666">0.10</text>
<text x="193.1" y="539.2" text-anchor="middle" style="font-family:'DejaVu Sans',sans-serif;font-size:12px" fill="#666">0.15</text>
<text x="237.3" y="539.2" text-anchor="middle" style="font-family:'DejaVu Sans',sans-serif;font-size:12px" fill="#666">0.20</text>
<text x="281.5" y="539.2" text-anchor="middle" style="font-family:'DejaVu Sans',sans-serif;font-size:12px" fill="#666">0.25</text>
<text x="325.7" y="539.2" text-anchor="middle" style="font-family:'DejaVu Sans',sans-serif;font-size:12px" fill="#666">0.30</text>
<text x="369.9" y="539.2" text-anchor="middle" style="font-family:'DejaVu Sans',sans-serif;font-size:12px" fill="#666">0.35</text>
<text x="414.2" y="539.2" text-anchor="middle" style="font-family:'DejaVu Sans',sans-serif;font-size:12px" fill="#666">0.40</text>
<text x="458.4" y="539.2" text-anchor="middle" style="font-family:'DejaVu Sans',sans-serif;font-size:12px" fill="#666">0.45</text>
<text x="502.6" y="539.2" text-anchor="middle" style="font-family:'DejaVu Sans',sans-serif;font-size:12px" fill="#666">0.50</text>
<text x="547.5" y="539.2" text-anchor="end" style="font-family:'DejaVu Sans',sans-serif;font-size:12px" fill="#666">0.55</text>
<text x="310.5" y="560.5" text-anchor="middle" style="font-family:'DejaVu Sans',sans-serif;font-size:12px" fill="#333">Latitude (generated)</text>
<text transform="translate(29.5 281.5) rotate(-90)" text-anchor="middle" style="font-family:'DejaVu Sans',sans-serif;font-size:12px" fill="#333">Longitude (generated)</text>
 <g id="marks" fill="none" stroke="#4471a4" stroke-width="2.1"><circle cx="224.4" cy="152.0" r="4.7"/><circle cx="234.3" cy="149.0" r="4.7"/><circle cx="241.0" cy="151.8" r="4.7"/><circle cx="250.1" cy="152.5" r="4.7"/><circle cx="260.1" cy="148.9" r="4.7"/><circle cx="267.3" cy="152.3" r="4.7"/><circle cx="276.8" cy="152.4" r="4.7"/><circle cx="286.3" cy="149.0" r="4.7"/><circle cx="292.8" cy="152.8" r="4.7"/><circle cx="302.4" cy="152.8" r="4.7"/><circle cx="312.3" cy="149.2" r="4.7"/><circle cx="318.9" cy="152.8" r="4.7"/><circle cx="328.1" cy="152.5" r="4.7"/><circle cx="338.4" cy="149.7" r="4.7"/><circle cx="344.7" cy="153.3" r="4.7"/><circle cx="354.4" cy="153.4" r="4.7"/><circle cx="363.8" cy="150.2" r="4.7"/><circle cx="370.3" cy="153.5" r="4.7"/><circle cx="380.5" cy="152.9" r="4.7"/><circle cx="389.4" cy="153.1" r="4.7"/><circle cx="397.8" cy="153.3" r="4.7"/><circle cx="391.1" cy="144.3" r="4.7"/><circle cx="383.9" cy="136.2" r="4.7"/><circle cx="376.6" cy="128.2" r="4.7"/><circle cx="369.8" cy="120.3" r="4.7"/><circle cx="362.8" cy="112.1" r="4.7"/><circle cx="356.0" cy="103.9" r="4.7"/><circle cx="348.7" cy="94.7" r="4.7"/><circle cx="341.8" cy="87.4" r="4.7"/><circle cx="334.8" cy="78.7" r="4.7"/><circle cx="327.5" cy="70.0" r="4.7"/><circle cx="373.4" cy="139.9" r="4.7"/><circle cx="365.6" cy="131.0" r="4.7"/><circle cx="359.2" cy="123.9" r="4.7"/><circle cx="351.2" cy="115.4" r="4.7"/><circle cx="344.6" cy="106.4" r="4.7"/><circle cx="337.3" cy="98.8" r="4.7"/><circle cx="331.0" cy="89.7" r="4.7"/><circle cx="362.9" cy="143.5" r="4.7"/><circle cx="356.0" cy="135.6" r="4.7"/><circle cx="349.1" cy="128.1" r="4.7"/><circle cx="341.6" cy="119.9" r="4.7"/><circle cx="334.3" cy="110.5" r="4.7"/><circle cx="327.5" cy="102.2" r="4.7"/><circle cx="320.8" cy="108.5" r="4.7"/><circle cx="320.2" cy="116.1" r="4.7"/><circle cx="321.8" cy="124.2" r="4.7"/><circle cx="320.9" cy="132.6" r="4.7"/><circle cx="321.2" cy="141.9" r="4.7"/><circle cx="330.8" cy="122.8" r="4.7"/><circle cx="330.3" cy="131.5" r="4.7"/><circle cx="330.8" cy="140.9" r="4.7"/><circle cx="340.7" cy="131.8" r="4.7"/><circle cx="340.8" cy="140.2" r="4.7"/><circle cx="350.7" cy="143.7" r="4.7"/><circle cx="232.2" cy="143.5" r="4.7"/><circle cx="238.8" cy="135.6" r="4.7"/><circle cx="245.8" cy="127.1" r="4.7"/><circle cx="252.8" cy="118.9" r="4.7"/><circle cx="260.2" cy="110.6" r="4.7"/><circle cx="267.1" cy="102.7" r="4.7"/><circle cx="273.8" cy="94.3" r="4.7"/><circle cx="281.5" cy="85.8" r="4.7"/><circle cx="288.2" cy="78.0" r="4.7"/><circle cx="295.2" cy="69.2" r="4.7"/><circle cx="302.5" cy="61.4" r="4.7"/><circle cx="248.4" cy="140.7" r="4.7"/><circle cx="255.5" cy="132.4" r="4.7"/><circle cx="262.4" cy="123.7" r="4.7"/><circle cx="269.9" cy="116.0" r="4.7"/><circle cx="276.8" cy="107.1" r="4.7"/><circle cx="283.6" cy="99.1" r="4.7"/><circle cx="290.7" cy="91.1" r="4.7"/><circle cx="298.4" cy="82.3" r="4.7"/><circle cx="304.9" cy="74.6" r="4.7"/><circle cx="312.3" cy="66.4" r="4.7"/><circle cx="319.2" cy="57.5" r="4.7"/><circle cx="258.0" cy="145.5" r="4.7"/><circle cx="265.1" cy="136.8" r="4.7"/><circle cx="272.3" cy="128.7" r="4.7"/><circle cx="279.3" cy="120.9" r="4.7"/><circle cx="286.2" cy="111.8" r="4.7"/><circle cx="294.0" cy="104.3" r="4.7"/><circle cx="301.1" cy="95.7" r="4.7"/><circle cx="308.1" cy="87.9" r="4.7"/><circle cx="314.6" cy="79.5" r="4.7"/><circle cx="274.9" cy="141.7" r="4.7"/><circle cx="281.9" cy="133.3" r="4.7"/><circle cx="288.7" cy="125.4" r="4.7"/><circle cx="296.0" cy="117.4" r="4.7"/><circle cx="302.8" cy="109.2" r="4.7"/><circle cx="310.5" cy="101.0" r="4.7"/><circle cx="317.7" cy="92.7" r="4.7"/><circle cx="291.7" cy="138.0" r="4.7"/><circle cx="299.0" cy="129.9" r="4.7"/><circle cx="305.6" cy="122.1" r="4.7"/><circle cx="312.9" cy="113.6" r="4.7"/><circle cx="301.2" cy="143.1" r="4.7"/><circle cx="308.7" cy="135.1" r="4.7"/><circle cx="319.4" cy="71.3" r="4.7"/><circle cx="325.0" cy="78.8" r="4.7"/><circle cx="313.0" cy="125.1" r="4.7"/><circle cx="380.9" cy="144.1" r="4.7"/><circle cx="191.0" cy="250.3" r="4.7"/><circle cx="200.9" cy="247.3" r="4.7"/><circle cx="207.4" cy="250.8" r="4.7"/><circle cx="216.6" cy="250.3" r="4.7"/><circle cx="226.4" cy="247.2" r="4.7"/><circle cx="232.9" cy="251.1" r="4.7"/><circle cx="243.4" cy="250.5" r="4.7"/><circle cx="252.7" cy="247.5" r="4.7"/><circle cx="259.0" cy="250.8" r="4.7"/><circle cx="269.0" cy="251.0" r="4.7"/><circle cx="278.5" cy="247.6" r="4.7"/><circle cx="284.9" cy="250.7" r="4.7"/><circle cx="294.9" cy="251.3" r="4.7"/><circle cx="304.4" cy="247.6" r="4.7"/><circle cx="310.7" cy="251.1" r="4.7"/><circle cx="320.8" cy="251.5" r="4.7"/><circle cx="330.3" cy="248.4" r="4.7"/><circle cx="337.0" cy="251.3" r="4.7"/><circle cx="346.5" cy="251.4" r="4.7"/><circle cx="356.5" cy="248.2" r="4.7"/><circle cx="363.0" cy="251.5" r="4.7"/><circle cx="372.2" cy="251.6" r="4.7"/><circle cx="382.4" cy="248.1" r="4.7"/><circle cx="388.6" cy="251.6" r="4.7"/><circle cx="398.8" cy="252.1" r="4.7"/><circle cx="408.0" cy="248.9" r="4.7"/><circle cx="414.9" cy="251.6" r="4.7"/><circle cx="424.3" cy="251.6" r="4.7"/><circle cx="431.1" cy="252.0" r="4.7"/><circle cx="424.9" cy="243.4" r="4.7"/><circle cx="417.6" cy="235.1" r="4.7"/><circle cx="410.3" cy="226.1" r="4.7"/><circle cx="403.3" cy="217.7" r="4.7"/><circle cx="395.7" cy="210.4" r="4.7"/><circle cx="388.5" cy="201.3" r="4.7"/><circle cx="381.5" cy="194.0" r="4.7"/><circle cx="374.5" cy="184.8" r="4.7"/><circle cx="368.2" cy="176.6" r="4.7"/><circle cx="361.1" cy="169.0" r="4.7"/><circle cx="354.1" cy="161.1" r="4.7"/><circle cx="406.6" cy="238.6" r="4.7"/><circle cx="398.8" cy="230.3" r="4.7"/><circle cx="392.3" cy="222.0" r="4.7"/><circle cx="384.8" cy="213.8" r="4.7"/><circle cx="378.7" cy="204.7" r="4.7"/><circle cx="370.9" cy="197.1" r="4.7"/><circle cx="364.4" cy="188.5" r="4.7"/><circle cx="356.5" cy="180.2" r="4.7"/><circle cx="350.0" cy="172.6" r="4.7"/><circle cx="342.6" cy="163.9" r="4.7"/><circle cx="396.2" cy="242.4" r="4.7"/><circle cx="389.1" cy="233.8" r="4.7"/><circle cx="382.1" cy="226.6" r="4.7"/><circle cx="375.0" cy="218.1" r="4.7"/><circle cx="367.6" cy="209.8" r="4.7"/><circle cx="361.2" cy="201.5" r="4.7"/><circle cx="353.9" cy="193.0" r="4.7"/><circle cx="346.9" cy="185.3" r="4.7"/><circle cx="339.3" cy="176.1" r="4.7"/><circle cx="332.9" cy="168.8" r="4.7"/><circle cx="325.5" cy="160.0" r="4.7"/><circle cx="314.4" cy="162.8" r="4.7"/><circle cx="315.2" cy="171.0" r="4.7"/><circle cx="315.3" cy="180.0" r="4.7"/><circle cx="315.4" cy="188.9" r="4.7"/><circle cx="315.2" cy="198.7" r="4.7"/><circle cx="314.1" cy="208.1" r="4.7"/><circle cx="314.4" cy="217.0" r="4.7"/><circle cx="315.5" cy="225.4" r="4.7"/><circle cx="315.0" cy="234.3" r="4.7"/><circle cx="315.6" cy="242.1" r="4.7"/><circle cx="325.2" cy="173.6" r="4.7"/><circle cx="325.2" cy="183.3" r="4.7"/><circle cx="324.3" cy="192.9" r="4.7"/><circle cx="325.1" cy="203.6" r="4.7"/><circle cx="324.3" cy="213.1" r="4.7"/><circle cx="324.2" cy="221.9" r="4.7"/><circle cx="325.5" cy="230.0" r="4.7"/><circle cx="324.5" cy="237.7" r="4.7"/><circle cx="334.3" cy="184.1" r="4.7"/><circle cx="333.7" cy="194.5" r="4.7"/><circle cx="334.6" cy="204.4" r="4.7"/><circle cx="335.4" cy="213.8" r="4.7"/><circle cx="333.9" cy="222.1" r="4.7"/><circle cx="333.9" cy="230.0" r="4.7"/><circle cx="333.9" cy="237.3" r="4.7"/><circle cx="344.7" cy="197.2" r="4.7"/><circle cx="344.9" cy="206.5" r="4.7"/><circle cx="344.5" cy="214.8" r="4.7"/><circle cx="344.1" cy="222.9" r="4.7"/><circle cx="344.5" cy="229.8" r="4.7"/><circle cx="344.6" cy="236.6" r="4.7"/><circle cx="344.7" cy="243.5" r="4.7"/><circle cx="353.9" cy="206.5" r="4.7"/><circle cx="354.3" cy="214.7" r="4.7"/><circle cx="353.9" cy="222.0" r="4.7"/><circle cx="354.6" cy="229.1" r="4.7"/><circle cx="354.6" cy="235.9" r="4.7"/><circle cx="363.5" cy="219.4" r="4.7"/><circle cx="363.7" cy="226.7" r="4.7"/><circle cx="364.5" cy="234.4" r="4.7"/><circle cx="363.3" cy="242.4" r="4.7"/><circle cx="374.3" cy="229.2" r="4.7"/><circle cx="373.2" cy="237.2" r="4.7"/><circle cx="198.0" cy="242.0" r="4.7"/><circle cx="205.6" cy="233.6" r="4.7"/><circle cx="212.7" cy="226.1" r="4.7"/><circle cx="219.9" cy="217.4" r="4.7"/><circle cx="226.6" cy="209.3" r="4.7"/><circle cx="233.8" cy="201.4" r="4.7"/><circle cx="240.9" cy="192.6" r="4.7"/><circle cx="248.1" cy="184.5" r="4.7"/><circle cx="255.0" cy="176.5" r="4.7"/><circle cx="261.5" cy="168.2" r="4.7"/><circle cx="269.2" cy="159.7" r="4.7"/><circle cx="215.0" cy="238.8" r="4.7"/><circle cx="221.8" cy="230.6" r="4.7"/><circle cx="228.8" cy="222.4" r="4.7"/><circle cx="236.4" cy="214.1" r="4.7"/><circle cx="243.4" cy="206.3" r="4.7"/><circle cx="250.8" cy="197.3" r="4.7"/><circle cx="257.8" cy="189.5" r="4.7"/><circle cx="264.2" cy="181.0" r="4.7"/><circle cx="271.4" cy="172.5" r="4.7"/><circle cx="278.8" cy="165.0" r="4.7"/><circle cx="224.5" cy="244.1" r="4.7"/><circle cx="231.9" cy="235.2" r="4.7"/><circle cx="239.2" cy="227.3" r="4.7"/><circle cx="246.3" cy="219.2" r="4.7"/><circle cx="253.2" cy="210.6" r="4.7"/><circle cx="260.3" cy="202.9" r="4.7"/><circle cx="267.5" cy="194.2" r="4.7"/><circle cx="274.5" cy="186.0" r="4.7"/><circle cx="281.0" cy="177.3" r="4.7"/><circle cx="288.0" cy="169.2" r="4.7"/><circle cx="295.2" cy="161.2" r="4.7"/><circle cx="241.6" cy="240.4" r="4.7"/><circle cx="248.4" cy="232.2" r="4.7"/><circle cx="255.4" cy="223.8" r="4.7"/><circle cx="262.9" cy="215.5" r="4.7"/><circle cx="269.4" cy="207.7" r="4.7"/><circle cx="277.0" cy="199.0" r="4.7"/><circle cx="283.8" cy="190.9" r="4.7"/><circle cx="291.1" cy="182.3" r="4.7"/><circle cx="297.6" cy="174.1" r="4.7"/><circle cx="305.4" cy="165.8" r="4.7"/><circle cx="258.1" cy="236.7" r="4.7"/><circle cx="265.0" cy="228.4" r="4.7"/><circle cx="272.2" cy="220.2" r="4.7"/><circle cx="279.0" cy="211.9" r="4.7"/><circle cx="286.2" cy="204.0" r="4.7"/><circle cx="293.2" cy="195.3" r="4.7"/><circle cx="300.6" cy="187.4" r="4.7"/><circle cx="307.9" cy="178.8" r="4.7"/><circle cx="267.4" cy="242.2" r="4.7"/><circle cx="274.6" cy="233.2" r="4.7"/><circle cx="282.0" cy="225.0" r="4.7"/><circle cx="289.2" cy="216.9" r="4.7"/><circle cx="295.8" cy="208.4" r="4.7"/><circle cx="303.4" cy="200.4" r="4.7"/><circle cx="284.3" cy="238.2" r="4.7"/><circle cx="291.9" cy="230.3" r="4.7"/><circle cx="298.6" cy="221.6" r="4.7"/><circle cx="306.0" cy="214.1" r="4.7"/><circle cx="293.8" cy="242.9" r="4.7"/><circle cx="301.0" cy="234.6" r="4.7"/><circle cx="308.0" cy="226.9" r="4.7"/><circle cx="286.2" cy="160.8" r="4.7"/><circle cx="334.3" cy="160.1" r="4.7"/><circle cx="414.5" cy="243.1" r="4.7"/><circle cx="153.9" cy="361.2" r="4.7"/><circle cx="163.0" cy="358.6" r="4.7"/><circle cx="169.3" cy="361.5" r="4.7"/><circle cx="179.2" cy="361.8" r="4.7"/><circle cx="189.5" cy="358.2" r="4.7"/><circle cx="195.8" cy="361.9" r="4.7"/><circle cx="205.6" cy="361.8" r="4.7"/><circle cx="215.4" cy="358.5" r="4.7"/><circle cx="221.4" cy="361.6" r="4.7"/><circle cx="231.5" cy="361.8" r="4.7"/><circle cx="240.7" cy="358.4" r="4.7"/><circle cx="247.6" cy="362.0" r="4.7"/><circle cx="257.3" cy="361.9" r="4.7"/><circle cx="266.8" cy="358.5" r="4.7"/><circle cx="273.5" cy="361.7" r="4.7"/><circle cx="283.0" cy="362.3" r="4.7"/><circle cx="292.9" cy="358.6" r="4.7"/><circle cx="298.9" cy="362.4" r="4.7"/><circle cx="309.0" cy="362.5" r="4.7"/><circle cx="319.0" cy="359.0" r="4.7"/><circle cx="325.5" cy="362.4" r="4.7"/><circle cx="334.6" cy="362.2" r="4.7"/><circle cx="344.1" cy="359.1" r="4.7"/><circle cx="351.5" cy="362.1" r="4.7"/><circle cx="360.8" cy="362.1" r="4.7"/><circle cx="370.0" cy="359.4" r="4.7"/><circle cx="376.6" cy="362.1" r="4.7"/><circle cx="386.3" cy="362.7" r="4.7"/><circle cx="396.4" cy="359.0" r="4.7"/><circle cx="402.5" cy="363.0" r="4.7"/><circle cx="412.2" cy="362.7" r="4.7"/><circle cx="422.1" cy="359.7" r="4.7"/><circle cx="428.8" cy="363.0" r="4.7"/><circle cx="438.4" cy="362.5" r="4.7"/><circle cx="447.8" cy="359.3" r="4.7"/><circle cx="454.9" cy="362.5" r="4.7"/><circle cx="463.8" cy="363.3" r="4.7"/><circle cx="468.2" cy="363.2" r="4.7"/><circle cx="461.6" cy="354.0" r="4.7"/><circle cx="454.7" cy="346.2" r="4.7"/><circle cx="448.1" cy="337.7" r="4.7"/><circle cx="441.2" cy="329.8" r="4.7"/><circle cx="433.6" cy="321.2" r="4.7"/><circle cx="426.7" cy="312.4" r="4.7"/><circle cx="420.1" cy="304.7" r="4.7"/><circle cx="413.0" cy="296.0" r="4.7"/><circle cx="405.6" cy="288.0" r="4.7"/><circle cx="398.7" cy="279.3" r="4.7"/><circle cx="391.2" cy="271.6" r="4.7"/><circle cx="383.8" cy="263.4" r="4.7"/><circle cx="444.5" cy="349.2" r="4.7"/><circle cx="437.3" cy="341.2" r="4.7"/><circle cx="429.7" cy="332.6" r="4.7"/><circle cx="423.5" cy="324.3" r="4.7"/><circle cx="415.8" cy="315.8" r="4.7"/><circle cx="408.4" cy="307.6" r="4.7"/><circle cx="402.2" cy="300.0" r="4.7"/><circle cx="395.1" cy="292.1" r="4.7"/><circle cx="387.7" cy="283.8" r="4.7"/><circle cx="380.5" cy="274.9" r="4.7"/><circle cx="373.9" cy="267.3" r="4.7"/><circle cx="366.9" cy="258.5" r="4.7"/><circle cx="332.8" cy="260.9" r="4.7"/><circle cx="332.6" cy="268.7" r="4.7"/><circle cx="332.3" cy="275.7" r="4.7"/><circle cx="333.0" cy="282.9" r="4.7"/><circle cx="333.4" cy="289.7" r="4.7"/><circle cx="332.7" cy="297.4" r="4.7"/><circle cx="332.6" cy="304.7" r="4.7"/><circle cx="332.8" cy="311.9" r="4.7"/><circle cx="333.5" cy="319.4" r="4.7"/><circle cx="333.9" cy="327.3" r="4.7"/><circle cx="332.4" cy="334.2" r="4.7"/><circle cx="333.0" cy="341.7" r="4.7"/><circle cx="333.6" cy="348.7" r="4.7"/><circle cx="343.4" cy="260.9" r="4.7"/><circle cx="343.4" cy="267.4" r="4.7"/><circle cx="342.9" cy="274.0" r="4.7"/><circle cx="342.0" cy="279.9" r="4.7"/><circle cx="342.7" cy="287.0" r="4.7"/><circle cx="343.7" cy="293.2" r="4.7"/><circle cx="341.9" cy="299.7" r="4.7"/><circle cx="342.0" cy="306.5" r="4.7"/><circle cx="342.5" cy="313.0" r="4.7"/><circle cx="342.7" cy="320.8" r="4.7"/><circle cx="342.7" cy="328.5" r="4.7"/><circle cx="343.5" cy="337.0" r="4.7"/><circle cx="342.1" cy="345.1" r="4.7"/><circle cx="352.0" cy="258.3" r="4.7"/><circle cx="353.3" cy="265.3" r="4.7"/><circle cx="352.9" cy="271.1" r="4.7"/><circle cx="352.8" cy="276.7" r="4.7"/><circle cx="352.0" cy="282.1" r="4.7"/><circle cx="353.5" cy="288.0" r="4.7"/><circle cx="352.3" cy="293.7" r="4.7"/><circle cx="352.5" cy="300.5" r="4.7"/><circle cx="352.3" cy="306.7" r="4.7"/><circle cx="353.2" cy="314.2" r="4.7"/><circle cx="352.8" cy="322.3" r="4.7"/><circle cx="352.7" cy="331.5" r="4.7"/><circle cx="353.0" cy="340.7" r="4.7"/><circle cx="352.9" cy="349.3" r="4.7"/><circle cx="363.2" cy="269.9" r="4.7"/><circle cx="363.2" cy="274.3" r="4.7"/><circle cx="363.0" cy="279.2" r="4.7"/><circle cx="363.2" cy="284.5" r="4.7"/><circle cx="362.2" cy="289.3" r="4.7"/><circle cx="362.0" cy="295.2" r="4.7"/><circle cx="361.9" cy="300.8" r="4.7"/><circle cx="362.4" cy="308.0" r="4.7"/><circle cx="362.6" cy="316.5" r="4.7"/><circle cx="362.0" cy="325.2" r="4.7"/><circle cx="362.0" cy="334.2" r="4.7"/><circle cx="362.5" cy="343.5" r="4.7"/><circle cx="363.2" cy="352.7" r="4.7"/><circle cx="373.1" cy="278.5" r="4.7"/><circle cx="371.6" cy="283.5" r="4.7"/><circle cx="371.6" cy="289.5" r="4.7"/><circle cx="372.9" cy="296.1" r="4.7"/><circle cx="372.3" cy="304.0" r="4.7"/><circle cx="372.0" cy="312.3" r="4.7"/><circle cx="371.5" cy="320.7" r="4.7"/><circle cx="371.9" cy="330.7" r="4.7"/><circle cx="371.6" cy="340.2" r="4.7"/><circle cx="373.1" cy="349.7" r="4.7"/><circle cx="382.0" cy="293.0" r="4.7"/><circle cx="381.1" cy="300.0" r="4.7"/><circle cx="382.5" cy="308.6" r="4.7"/><circle cx="382.1" cy="317.5" r="4.7"/><circle cx="382.6" cy="327.0" r="4.7"/><circle cx="382.8" cy="337.1" r="4.7"/><circle cx="382.8" cy="345.8" r="4.7"/><circle cx="381.6" cy="353.3" r="4.7"/><circle cx="391.6" cy="304.7" r="4.7"/><circle cx="390.9" cy="312.8" r="4.7"/><circle cx="392.7" cy="321.8" r="4.7"/><circle cx="392.3" cy="330.3" r="4.7"/><circle cx="391.7" cy="339.0" r="4.7"/><circle cx="391.5" cy="347.4" r="4.7"/><circle cx="402.4" cy="316.1" r="4.7"/><circle cx="401.2" cy="324.4" r="4.7"/><circle cx="400.9" cy="331.7" r="4.7"/><circle cx="401.3" cy="339.7" r="4.7"/><circle cx="402.4" cy="346.8" r="4.7"/><circle cx="411.3" cy="325.5" r="4.7"/><circle cx="411.3" cy="332.2" r="4.7"/><circle cx="410.6" cy="339.7" r="4.7"/><circle cx="412.3" cy="346.7" r="4.7"/><circle cx="411.5" cy="354.4" r="4.7"/><circle cx="421.6" cy="338.2" r="4.7"/><circle cx="421.2" cy="345.7" r="4.7"/><circle cx="430.5" cy="346.7" r="4.7"/><circle cx="160.4" cy="352.8" r="4.7"/><circle cx="167.7" cy="345.4" r="4.7"/><circle cx="174.8" cy="337.0" r="4.7"/><circle cx="182.1" cy="328.8" r="4.7"/><circle cx="189.3" cy="320.2" r="4.7"/><circle cx="196.1" cy="311.7" r="4.7"/><circle cx="203.4" cy="303.6" r="4.7"/><circle cx="210.1" cy="295.9" r="4.7"/><circle cx="217.0" cy="287.0" r="4.7"/><circle cx="224.6" cy="279.1" r="4.7"/><circle cx="231.0" cy="270.3" r="4.7"/><circle cx="238.3" cy="262.1" r="4.7"/><circle cx="177.6" cy="349.6" r="4.7"/><circle cx="184.2" cy="341.5" r="4.7"/><circle cx="191.5" cy="333.3" r="4.7"/><circle cx="198.7" cy="325.3" r="4.7"/><circle cx="205.6" cy="316.5" r="4.7"/><circle cx="213.1" cy="308.8" r="4.7"/><circle cx="219.4" cy="300.3" r="4.7"/><circle cx="227.1" cy="292.6" r="4.7"/><circle cx="233.6" cy="283.4" r="4.7"/><circle cx="241.0" cy="275.5" r="4.7"/><circle cx="248.5" cy="267.7" r="4.7"/><circle cx="255.0" cy="259.0" r="4.7"/><circle cx="187.1" cy="355.1" r="4.7"/><circle cx="193.8" cy="346.4" r="4.7"/><circle cx="200.8" cy="338.4" r="4.7"/><circle cx="207.8" cy="330.4" r="4.7"/><circle cx="215.3" cy="321.8" r="4.7"/><circle cx="222.0" cy="313.2" r="4.7"/><circle cx="229.4" cy="305.6" r="4.7"/><circle cx="236.6" cy="296.8" r="4.7"/><circle cx="244.0" cy="288.9" r="4.7"/><circle cx="250.7" cy="280.2" r="4.7"/><circle cx="257.6" cy="272.6" r="4.7"/><circle cx="264.5" cy="264.0" r="4.7"/><circle cx="203.8" cy="351.2" r="4.7"/><circle cx="211.0" cy="343.5" r="4.7"/><circle cx="218.2" cy="335.1" r="4.7"/><circle cx="224.7" cy="326.2" r="4.7"/><circle cx="232.0" cy="318.2" r="4.7"/><circle cx="238.8" cy="310.4" r="4.7"/><circle cx="245.9" cy="302.1" r="4.7"/><circle cx="253.7" cy="293.3" r="4.7"/><circle cx="260.7" cy="285.3" r="4.7"/><circle cx="267.2" cy="276.8" r="4.7"/><circle cx="274.1" cy="268.8" r="4.7"/><circle cx="281.5" cy="260.9" r="4.7"/><circle cx="220.8" cy="347.6" r="4.7"/><circle cx="227.4" cy="339.6" r="4.7"/><circle cx="234.3" cy="331.2" r="4.7"/><circle cx="241.5" cy="323.4" r="4.7"/><circle cx="248.6" cy="314.6" r="4.7"/><circle cx="255.6" cy="306.7" r="4.7"/><circle cx="263.0" cy="298.2" r="4.7"/><circle cx="270.2" cy="290.0" r="4.7"/><circle cx="277.2" cy="282.1" r="4.7"/><circle cx="283.9" cy="273.9" r="4.7"/><circle cx="291.1" cy="265.5" r="4.7"/><circle cx="298.4" cy="257.3" r="4.7"/><circle cx="230.1" cy="352.4" r="4.7"/><circle cx="237.5" cy="344.9" r="4.7"/><circle cx="244.3" cy="336.4" r="4.7"/><circle cx="251.1" cy="328.4" r="4.7"/><circle cx="258.6" cy="319.6" r="4.7"/><circle cx="265.8" cy="312.0" r="4.7"/><circle cx="272.5" cy="303.8" r="4.7"/><circle cx="279.7" cy="294.8" r="4.7"/><circle cx="286.9" cy="286.7" r="4.7"/><circle cx="294.0" cy="278.7" r="4.7"/><circle cx="300.6" cy="270.4" r="4.7"/><circle cx="308.3" cy="262.1" r="4.7"/><circle cx="246.9" cy="349.8" r="4.7"/><circle cx="253.9" cy="341.2" r="4.7"/><circle cx="261.1" cy="333.2" r="4.7"/><circle cx="267.8" cy="324.3" r="4.7"/><circle cx="275.4" cy="316.5" r="4.7"/><circle cx="282.1" cy="308.5" r="4.7"/><circle cx="289.7" cy="300.0" r="4.7"/><circle cx="296.8" cy="292.0" r="4.7"/><circle cx="303.7" cy="283.3" r="4.7"/><circle cx="310.1" cy="275.4" r="4.7"/><circle cx="317.9" cy="266.8" r="4.7"/><circle cx="324.7" cy="258.8" r="4.7"/><circle cx="256.3" cy="354.5" r="4.7"/><circle cx="263.7" cy="345.9" r="4.7"/><circle cx="270.3" cy="337.8" r="4.7"/><circle cx="277.6" cy="329.8" r="4.7"/><circle cx="284.5" cy="321.2" r="4.7"/><circle cx="291.6" cy="313.0" r="4.7"/><circle cx="299.1" cy="304.4" r="4.7"/><circle cx="305.7" cy="296.5" r="4.7"/><circle cx="312.9" cy="288.3" r="4.7"/><circle cx="319.9" cy="279.7" r="4.7"/><circle cx="273.2" cy="350.5" r="4.7"/><circle cx="280.1" cy="342.5" r="4.7"/><circle cx="287.8" cy="334.1" r="4.7"/><circle cx="294.9" cy="326.1" r="4.7"/><circle cx="301.5" cy="317.7" r="4.7"/><circle cx="309.1" cy="309.4" r="4.7"/><circle cx="315.8" cy="301.4" r="4.7"/><circle cx="322.5" cy="292.9" r="4.7"/><circle cx="290.2" cy="347.9" r="4.7"/><circle cx="296.7" cy="339.5" r="4.7"/><circle cx="304.4" cy="330.8" r="4.7"/><circle cx="311.2" cy="323.2" r="4.7"/><circle cx="318.2" cy="314.8" r="4.7"/><circle cx="325.1" cy="306.4" r="4.7"/><circle cx="299.6" cy="352.7" r="4.7"/><circle cx="307.0" cy="344.1" r="4.7"/><circle cx="314.0" cy="335.8" r="4.7"/><circle cx="321.2" cy="327.4" r="4.7"/><circle cx="316.1" cy="349.1" r="4.7"/><circle cx="323.2" cy="341.0" r="4.7"/><circle cx="326.4" cy="354.1" r="4.7"/><circle cx="272.1" cy="259.7" r="4.7"/><circle cx="325.1" cy="271.3" r="4.7"/><circle cx="281.7" cy="351.4" r="4.7"/><circle cx="436.9" cy="352.5" r="4.7"/><circle cx="308.1" cy="353.7" r="4.7"/><circle cx="98.7" cy="491.1" r="4.7"/><circle cx="108.5" cy="487.6" r="4.7"/><circle cx="114.5" cy="491.2" r="4.7"/><circle cx="125.0" cy="490.8" r="4.7"/><circle cx="133.8" cy="487.6" r="4.7"/><circle cx="141.1" cy="491.1" r="4.7"/><circle cx="150.5" cy="491.6" r="4.7"/><circle cx="160.3" cy="487.8" r="4.7"/><circle cx="166.9" cy="490.8" r="4.7"/><circle cx="176.2" cy="491.4" r="4.7"/><circle cx="185.8" cy="487.7" r="4.7"/><circle cx="192.6" cy="491.2" r="4.7"/><circle cx="202.8" cy="491.0" r="4.7"/><circle cx="212.3" cy="488.1" r="4.7"/><circle cx="218.8" cy="491.4" r="4.7"/><circle cx="228.4" cy="491.3" r="4.7"/><circle cx="237.6" cy="488.2" r="4.7"/><circle cx="244.7" cy="491.4" r="4.7"/><circle cx="253.8" cy="491.4" r="4.7"/><circle cx="263.4" cy="488.2" r="4.7"/><circle cx="270.4" cy="491.6" r="4.7"/><circle cx="280.1" cy="491.4" r="4.7"/><circle cx="289.2" cy="488.1" r="4.7"/><circle cx="296.0" cy="491.4" r="4.7"/><circle cx="306.0" cy="491.5" r="4.7"/><circle cx="315.9" cy="488.6" r="4.7"/><circle cx="322.3" cy="491.9" r="4.7"/><circle cx="331.8" cy="491.7" r="4.7"/><circle cx="341.3" cy="488.3" r="4.7"/><circle cx="348.3" cy="491.8" r="4.7"/><circle cx="357.3" cy="492.2" r="4.7"/><circle cx="367.5" cy="488.8" r="4.7"/><circle cx="373.8" cy="491.6" r="4.7"/><circle cx="384.1" cy="491.7" r="4.7"/><circle cx="393.2" cy="489.2" r="4.7"/><circle cx="399.4" cy="492.0" r="4.7"/><circle cx="409.5" cy="491.8" r="4.7"/><circle cx="419.6" cy="488.8" r="4.7"/><circle cx="425.2" cy="492.1" r="4.7"/><circle cx="434.9" cy="492.3" r="4.7"/><circle cx="445.5" cy="489.3" r="4.7"/><circle cx="451.1" cy="492.3" r="4.7"/><circle cx="461.1" cy="492.2" r="4.7"/><circle cx="470.8" cy="488.9" r="4.7"/><circle cx="477.1" cy="492.3" r="4.7"/><circle cx="486.8" cy="492.7" r="4.7"/><circle cx="496.4" cy="489.5" r="4.7"/><circle cx="503.1" cy="492.0" r="4.7"/><circle cx="513.3" cy="492.4" r="4.7"/><circle cx="523.6" cy="492.4" r="4.7"/><circle cx="517.1" cy="483.1" r="4.7"/><circle cx="510.1" cy="475.3" r="4.7"/><circle cx="503.3" cy="466.5" r="4.7"/><circle cx="495.2" cy="459.0" r="4.7"/><circle cx="489.1" cy="450.5" r="4.7"/><circle cx="481.8" cy="442.4" r="4.7"/><circle cx="474.3" cy="434.0" r="4.7"/><circle cx="467.5" cy="425.3" r="4.7"/><circle cx="460.1" cy="417.9" r="4.7"/><circle cx="452.9" cy="409.3" r="4.7"/><circle cx="445.9" cy="400.9" r="4.7"/><circle cx="439.3" cy="393.1" r="4.7"/><circle cx="432.5" cy="384.6" r="4.7"/><circle cx="424.6" cy="376.1" r="4.7"/><circle cx="417.3" cy="367.8" r="4.7"/><circle cx="499.1" cy="478.9" r="4.7"/><circle cx="491.6" cy="470.1" r="4.7"/><circle cx="484.3" cy="461.9" r="4.7"/><circle cx="477.7" cy="453.7" r="4.7"/><circle cx="471.1" cy="445.9" r="4.7"/><circle cx="463.4" cy="437.4" r="4.7"/><circle cx="456.0" cy="429.6" r="4.7"/><circle cx="449.7" cy="420.9" r="4.7"/><circle cx="442.6" cy="412.5" r="4.7"/><circle cx="434.9" cy="404.2" r="4.7"/><circle cx="427.8" cy="396.4" r="4.7"/><circle cx="421.3" cy="388.3" r="4.7"/><circle cx="413.6" cy="380.1" r="4.7"/><circle cx="406.9" cy="371.4" r="4.7"/><circle cx="488.8" cy="483.0" r="4.7"/><circle cx="481.4" cy="474.7" r="4.7"/><circle cx="474.8" cy="466.8" r="4.7"/><circle cx="468.1" cy="457.9" r="4.7"/><circle cx="461.0" cy="450.4" r="4.7"/><circle cx="453.7" cy="442.4" r="4.7"/><circle cx="445.9" cy="433.9" r="4.7"/><circle cx="439.7" cy="424.8" r="4.7"/><circle cx="432.3" cy="417.6" r="4.7"/><circle cx="424.9" cy="409.2" r="4.7"/><circle cx="418.5" cy="400.5" r="4.7"/><circle cx="410.5" cy="392.0" r="4.7"/><circle cx="404.3" cy="384.0" r="4.7"/><circle cx="396.6" cy="375.7" r="4.7"/><circle cx="472.1" cy="478.8" r="4.7"/><circle cx="463.9" cy="471.4" r="4.7"/><circle cx="457.2" cy="462.4" r="4.7"/><circle cx="450.9" cy="454.1" r="4.7"/><circle cx="442.7" cy="446.5" r="4.7"/><circle cx="435.9" cy="437.5" r="4.7"/><circle cx="429.6" cy="429.2" r="4.7"/><circle cx="422.5" cy="421.1" r="4.7"/><circle cx="414.7" cy="412.7" r="4.7"/><circle cx="407.9" cy="404.9" r="4.7"/><circle cx="400.7" cy="396.6" r="4.7"/><circle cx="393.5" cy="388.7" r="4.7"/><circle cx="387.1" cy="380.4" r="4.7"/><circle cx="379.9" cy="371.3" r="4.7"/><circle cx="330.5" cy="369.3" r="4.7"/><circle cx="331.7" cy="376.3" r="4.7"/><circle cx="330.3" cy="381.4" r="4.7"/><circle cx="331.7" cy="385.9" r="4.7"/><circle cx="331.8" cy="390.5" r="4.7"/><circle cx="330.7" cy="396.0" r="4.7"/><circle cx="331.7" cy="400.4" r="4.7"/><circle cx="331.3" cy="405.6" r="4.7"/><circle cx="330.3" cy="411.1" r="4.7"/><circle cx="331.7" cy="416.8" r="4.7"/><circle cx="330.7" cy="423.5" r="4.7"/><circle cx="331.1" cy="431.5" r="4.7"/><circle cx="330.6" cy="440.4" r="4.7"/><circle cx="330.9" cy="450.6" r="4.7"/><circle cx="330.3" cy="460.2" r="4.7"/><circle cx="331.0" cy="470.2" r="4.7"/><circle cx="331.6" cy="478.7" r="4.7"/><circle cx="339.9" cy="370.0" r="4.7"/><circle cx="340.8" cy="375.6" r="4.7"/><circle cx="341.2" cy="380.7" r="4.7"/><circle cx="340.1" cy="386.7" r="4.7"/><circle cx="341.3" cy="391.1" r="4.7"/><circle cx="340.9" cy="396.2" r="4.7"/><circle cx="341.5" cy="402.1" r="4.7"/><circle cx="340.6" cy="407.1" r="4.7"/><circle cx="340.7" cy="414.3" r="4.7"/><circle cx="341.7" cy="421.9" r="4.7"/><circle cx="340.9" cy="430.2" r="4.7"/><circle cx="340.1" cy="439.8" r="4.7"/><circle cx="340.4" cy="450.2" r="4.7"/><circle cx="340.3" cy="459.4" r="4.7"/><circle cx="340.8" cy="468.1" r="4.7"/><circle cx="341.2" cy="475.8" r="4.7"/><circle cx="350.7" cy="369.5" r="4.7"/><circle cx="350.8" cy="374.7" r="4.7"/><circle cx="350.5" cy="381.1" r="4.7"/><circle cx="349.9" cy="387.1" r="4.7"/><circle cx="351.2" cy="393.0" r="4.7"/><circle cx="350.0" cy="399.2" r="4.7"/><circle cx="350.4" cy="405.4" r="4.7"/><circle cx="350.3" cy="412.5" r="4.7"/><circle cx="351.1" cy="420.4" r="4.7"/><circle cx="351.4" cy="428.5" r="4.7"/><circle cx="350.4" cy="437.5" r="4.7"/><circle cx="350.1" cy="446.0" r="4.7"/><circle cx="350.8" cy="455.0" r="4.7"/><circle cx="350.9" cy="464.1" r="4.7"/><circle cx="350.8" cy="472.2" r="4.7"/><circle cx="350.6" cy="479.3" r="4.7"/><circle cx="360.9" cy="369.1" r="4.7"/><circle cx="359.6" cy="376.3" r="4.7"/><circle cx="360.8" cy="382.8" r="4.7"/><circle cx="359.7" cy="389.5" r="4.7"/><circle cx="359.5" cy="396.2" r="4.7"/><circle cx="361.2" cy="403.2" r="4.7"/><circle cx="360.0" cy="410.7" r="4.7"/><circle cx="360.7" cy="418.2" r="4.7"/><circle cx="360.4" cy="426.0" r="4.7"/><circle cx="360.1" cy="434.5" r="4.7"/><circle cx="360.6" cy="442.9" r="4.7"/><circle cx="360.4" cy="451.2" r="4.7"/><circle cx="360.5" cy="458.6" r="4.7"/><circle cx="360.1" cy="466.1" r="4.7"/><circle cx="359.8" cy="473.0" r="4.7"/><circle cx="360.5" cy="480.6" r="4.7"/><circle cx="369.4" cy="375.9" r="4.7"/><circle cx="371.1" cy="383.0" r="4.7"/><circle cx="369.7" cy="391.0" r="4.7"/><circle cx="370.3" cy="398.5" r="4.7"/><circle cx="370.6" cy="405.8" r="4.7"/><circle cx="370.8" cy="414.0" r="4.7"/><circle cx="370.4" cy="421.4" r="4.7"/><circle cx="369.8" cy="427.7" r="4.7"/><circle cx="370.7" cy="434.4" r="4.7"/><circle cx="370.0" cy="442.1" r="4.7"/><circle cx="370.5" cy="449.4" r="4.7"/><circle cx="369.8" cy="455.9" r="4.7"/><circle cx="370.5" cy="463.4" r="4.7"/><circle cx="371.0" cy="471.0" r="4.7"/><circle cx="370.2" cy="478.5" r="4.7"/><circle cx="379.7" cy="386.2" r="4.7"/><circle cx="380.7" cy="393.7" r="4.7"/><circle cx="380.0" cy="401.5" r="4.7"/><circle cx="380.0" cy="409.0" r="4.7"/><circle cx="380.2" cy="415.9" r="4.7"/><circle cx="379.4" cy="422.4" r="4.7"/><circle cx="380.9" cy="428.7" r="4.7"/><circle cx="379.5" cy="434.6" r="4.7"/><circle cx="380.5" cy="440.4" r="4.7"/><circle cx="379.7" cy="446.9" r="4.7"/><circle cx="380.3" cy="454.1" r="4.7"/><circle cx="379.9" cy="461.6" r="4.7"/><circle cx="379.6" cy="469.6" r="4.7"/><circle cx="380.5" cy="477.9" r="4.7"/><circle cx="390.4" cy="399.1" r="4.7"/><circle cx="390.2" cy="405.3" r="4.7"/><circle cx="390.0" cy="411.1" r="4.7"/><circle cx="390.3" cy="417.1" r="4.7"/><circle cx="389.9" cy="421.9" r="4.7"/><circle cx="389.9" cy="427.3" r="4.7"/><circle cx="390.3" cy="432.0" r="4.7"/><circle cx="389.5" cy="437.6" r="4.7"/><circle cx="389.8" cy="442.9" r="4.7"/><circle cx="390.3" cy="450.0" r="4.7"/><circle cx="389.6" cy="457.5" r="4.7"/><circle cx="390.4" cy="465.4" r="4.7"/><circle cx="389.0" cy="474.6" r="4.7"/><circle cx="400.3" cy="409.2" r="4.7"/><circle cx="400.2" cy="413.9" r="4.7"/><circle cx="399.4" cy="419.0" r="4.7"/><circle cx="398.8" cy="424.5" r="4.7"/><circle cx="398.9" cy="429.9" r="4.7"/><circle cx="399.8" cy="435.6" r="4.7"/><circle cx="400.2" cy="442.0" r="4.7"/><circle cx="399.3" cy="448.7" r="4.7"/><circle cx="400.4" cy="456.6" r="4.7"/><circle cx="399.1" cy="465.5" r="4.7"/><circle cx="399.0" cy="474.8" r="4.7"/><circle cx="400.5" cy="484.2" r="4.7"/><circle cx="408.9" cy="422.4" r="4.7"/><circle cx="408.9" cy="427.1" r="4.7"/><circle cx="409.5" cy="433.1" r="4.7"/><circle cx="408.9" cy="439.7" r="4.7"/><circle cx="409.1" cy="446.7" r="4.7"/><circle cx="408.8" cy="454.2" r="4.7"/><circle cx="409.0" cy="463.6" r="4.7"/><circle cx="410.1" cy="472.7" r="4.7"/><circle cx="409.1" cy="482.6" r="4.7"/><circle cx="418.3" cy="432.6" r="4.7"/><circle cx="419.9" cy="440.2" r="4.7"/><circle cx="419.3" cy="448.2" r="4.7"/><circle cx="419.3" cy="456.6" r="4.7"/><circle cx="418.5" cy="465.1" r="4.7"/><circle cx="418.5" cy="474.8" r="4.7"/><circle cx="429.8" cy="445.2" r="4.7"/><circle cx="429.5" cy="453.2" r="4.7"/><circle cx="428.8" cy="461.7" r="4.7"/><circle cx="428.5" cy="469.7" r="4.7"/><circle cx="428.3" cy="478.7" r="4.7"/><circle cx="438.3" cy="457.2" r="4.7"/><circle cx="439.6" cy="464.8" r="4.7"/><circle cx="438.4" cy="472.6" r="4.7"/><circle cx="439.5" cy="479.5" r="4.7"/><circle cx="448.3" cy="468.1" r="4.7"/><circle cx="447.7" cy="474.6" r="4.7"/><circle cx="449.5" cy="482.0" r="4.7"/><circle cx="458.8" cy="479.2" r="4.7"/><circle cx="105.8" cy="482.9" r="4.7"/><circle cx="112.5" cy="474.3" r="4.7"/><circle cx="120.1" cy="466.0" r="4.7"/><circle cx="127.2" cy="458.4" r="4.7"/><circle cx="134.0" cy="450.2" r="4.7"/><circle cx="141.3" cy="441.9" r="4.7"/><circle cx="148.3" cy="433.5" r="4.7"/><circle cx="155.5" cy="424.7" r="4.7"/><circle cx="162.4" cy="416.8" r="4.7"/><circle cx="169.4" cy="408.6" r="4.7"/><circle cx="176.9" cy="400.5" r="4.7"/><circle cx="183.9" cy="391.7" r="4.7"/><circle cx="190.9" cy="383.9" r="4.7"/><circle cx="198.2" cy="375.1" r="4.7"/><circle cx="122.2" cy="479.8" r="4.7"/><circle cx="129.5" cy="471.3" r="4.7"/><circle cx="136.8" cy="462.8" r="4.7"/><circle cx="143.7" cy="454.7" r="4.7"/><circle cx="151.3" cy="446.4" r="4.7"/><circle cx="158.2" cy="437.9" r="4.7"/><circle cx="165.2" cy="430.0" r="4.7"/><circle cx="172.3" cy="422.0" r="4.7"/><circle cx="178.8" cy="413.8" r="4.7"/><circle cx="186.3" cy="404.9" r="4.7"/><circle cx="193.3" cy="396.5" r="4.7"/><circle cx="200.1" cy="388.9" r="4.7"/><circle cx="207.6" cy="380.7" r="4.7"/><circle cx="214.2" cy="371.8" r="4.7"/><circle cx="132.1" cy="484.2" r="4.7"/><circle cx="139.4" cy="475.8" r="4.7"/><circle cx="146.5" cy="467.8" r="4.7"/><circle cx="153.2" cy="459.7" r="4.7"/><circle cx="160.1" cy="451.3" r="4.7"/><circle cx="167.3" cy="442.6" r="4.7"/><circle cx="174.6" cy="434.7" r="4.7"/><circle cx="181.8" cy="426.4" r="4.7"/><circle cx="189.2" cy="418.5" r="4.7"/><circle cx="195.6" cy="409.5" r="4.7"/><circle cx="203.4" cy="401.7" r="4.7"/><circle cx="209.7" cy="393.2" r="4.7"/><circle cx="217.3" cy="384.9" r="4.7"/><circle cx="224.1" cy="377.1" r="4.7"/><circle cx="231.1" cy="368.9" r="4.7"/><circle cx="149.3" cy="481.1" r="4.7"/><circle cx="156.1" cy="472.7" r="4.7"/><circle cx="162.9" cy="464.5" r="4.7"/><circle cx="170.3" cy="456.2" r="4.7"/><circle cx="177.2" cy="448.1" r="4.7"/><circle cx="184.0" cy="439.8" r="4.7"/><circle cx="191.8" cy="430.9" r="4.7"/><circle cx="198.2" cy="423.5" r="4.7"/><circle cx="205.2" cy="415.1" r="4.7"/><circle cx="212.7" cy="406.2" r="4.7"/><circle cx="219.8" cy="397.9" r="4.7"/><circle cx="227.1" cy="389.9" r="4.7"/><circle cx="234.2" cy="382.2" r="4.7"/><circle cx="240.6" cy="373.5" r="4.7"/><circle cx="165.3" cy="477.7" r="4.7"/><circle cx="172.4" cy="468.8" r="4.7"/><circle cx="179.5" cy="461.3" r="4.7"/><circle cx="186.7" cy="452.5" r="4.7"/><circle cx="193.9" cy="444.5" r="4.7"/><circle cx="201.0" cy="436.6" r="4.7"/><circle cx="208.0" cy="427.9" r="4.7"/><circle cx="215.5" cy="419.5" r="4.7"/><circle cx="222.0" cy="411.8" r="4.7"/><circle cx="229.2" cy="403.6" r="4.7"/><circle cx="236.7" cy="394.8" r="4.7"/><circle cx="243.4" cy="386.4" r="4.7"/><circle cx="250.9" cy="378.4" r="4.7"/><circle cx="257.5" cy="369.9" r="4.7"/><circle cx="175.1" cy="482.7" r="4.7"/><circle cx="182.1" cy="474.1" r="4.7"/><circle cx="189.6" cy="465.8" r="4.7"/><circle cx="196.6" cy="457.5" r="4.7"/><circle cx="203.4" cy="449.6" r="4.7"/><circle cx="211.1" cy="441.1" r="4.7"/><circle cx="217.6" cy="433.2" r="4.7"/><circle cx="224.6" cy="424.3" r="4.7"/><circle cx="232.1" cy="416.6" r="4.7"/><circle cx="239.1" cy="407.7" r="4.7"/><circle cx="246.5" cy="399.5" r="4.7"/><circle cx="253.0" cy="392.0" r="4.7"/><circle cx="260.5" cy="383.6" r="4.7"/><circle cx="267.0" cy="375.4" r="4.7"/><circle cx="192.0" cy="478.5" r="4.7"/><circle cx="199.4" cy="471.1" r="4.7"/><circle cx="205.8" cy="462.4" r="4.7"/><circle cx="213.7" cy="454.0" r="4.7"/><circle cx="220.2" cy="446.2" r="4.7"/><circle cx="227.4" cy="438.1" r="4.7"/><circle cx="234.9" cy="429.8" r="4.7"/><circle cx="241.8" cy="420.9" r="4.7"/><circle cx="248.9" cy="413.0" r="4.7"/><circle cx="255.8" cy="404.7" r="4.7"/><circle cx="262.7" cy="396.2" r="4.7"/><circle cx="270.3" cy="388.1" r="4.7"/><circle cx="276.6" cy="380.4" r="4.7"/><circle cx="284.1" cy="371.8" r="4.7"/><circle cx="201.6" cy="483.5" r="4.7"/><circle cx="208.7" cy="475.9" r="4.7"/><circle cx="215.7" cy="467.7" r="4.7"/><circle cx="222.8" cy="459.4" r="4.7"/><circle cx="229.7" cy="450.8" r="4.7"/><circle cx="236.8" cy="442.2" r="4.7"/><circle cx="244.2" cy="434.2" r="4.7"/><circle cx="251.3" cy="425.8" r="4.7"/><circle cx="258.2" cy="417.6" r="4.7"/><circle cx="265.8" cy="409.2" r="4.7"/><circle cx="272.4" cy="401.6" r="4.7"/><circle cx="279.6" cy="392.8" r="4.7"/><circle cx="287.1" cy="384.5" r="4.7"/><circle cx="293.4" cy="376.1" r="4.7"/><circle cx="300.8" cy="368.6" r="4.7"/><circle cx="218.3" cy="480.2" r="4.7"/><circle cx="225.8" cy="471.8" r="4.7"/><circle cx="232.2" cy="464.1" r="4.7"/><circle cx="239.3" cy="455.7" r="4.7"/><circle cx="246.5" cy="447.5" r="4.7"/><circle cx="254.2" cy="439.1" r="4.7"/><circle cx="260.7" cy="431.0" r="4.7"/><circle cx="268.2" cy="422.3" r="4.7"/><circle cx="274.9" cy="414.3" r="4.7"/><circle cx="282.2" cy="406.0" r="4.7"/><circle cx="289.4" cy="397.7" r="4.7"/><circle cx="296.7" cy="389.5" r="4.7"/><circle cx="303.2" cy="381.0" r="4.7"/><circle cx="310.1" cy="372.9" r="4.7"/><circle cx="235.5" cy="477.0" r="4.7"/><circle cx="242.2" cy="469.2" r="4.7"/><circle cx="249.8" cy="460.8" r="4.7"/><circle cx="256.2" cy="452.1" r="4.7"/><circle cx="263.5" cy="443.8" r="4.7"/><circle cx="270.5" cy="435.5" r="4.7"/><circle cx="277.4" cy="427.8" r="4.7"/><circle cx="284.8" cy="419.2" r="4.7"/><circle cx="291.8" cy="411.1" r="4.7"/><circle cx="299.1" cy="402.4" r="4.7"/><circle cx="306.3" cy="394.5" r="4.7"/><circle cx="312.9" cy="386.7" r="4.7"/><circle cx="320.4" cy="377.9" r="4.7"/><circle cx="244.8" cy="481.8" r="4.7"/><circle cx="251.6" cy="473.7" r="4.7"/><circle cx="258.8" cy="465.6" r="4.7"/><circle cx="266.1" cy="457.0" r="4.7"/><circle cx="273.5" cy="448.8" r="4.7"/><circle cx="279.9" cy="440.4" r="4.7"/><circle cx="286.9" cy="432.3" r="4.7"/><circle cx="294.8" cy="424.5" r="4.7"/><circle cx="301.6" cy="415.6" r="4.7"/><circle cx="308.3" cy="407.4" r="4.7"/><circle cx="315.5" cy="399.5" r="4.7"/><circle cx="322.3" cy="391.1" r="4.7"/><circle cx="261.9" cy="478.4" r="4.7"/><circle cx="268.8" cy="470.1" r="4.7"/><circle cx="275.7" cy="462.1" r="4.7"/><circle cx="282.4" cy="453.8" r="4.7"/><circle cx="289.9" cy="445.2" r="4.7"/><circle cx="296.8" cy="437.6" r="4.7"/><circle cx="303.9" cy="428.7" r="4.7"/><circle cx="311.0" cy="420.8" r="4.7"/><circle cx="318.1" cy="412.4" r="4.7"/><circle cx="270.9" cy="483.5" r="4.7"/><circle cx="278.2" cy="475.6" r="4.7"/><circle cx="285.8" cy="466.5" r="4.7"/><circle cx="292.7" cy="458.5" r="4.7"/><circle cx="299.2" cy="450.7" r="4.7"/><circle cx="307.0" cy="442.4" r="4.7"/><circle cx="313.9" cy="434.3" r="4.7"/><circle cx="320.9" cy="425.8" r="4.7"/><circle cx="288.3" cy="479.8" r="4.7"/><circle cx="294.8" cy="471.8" r="4.7"/><circle cx="302.2" cy="463.4" r="4.7"/><circle cx="309.6" cy="455.6" r="4.7"/><circle cx="316.5" cy="447.0" r="4.7"/><circle cx="323.6" cy="438.5" r="4.7"/><circle cx="305.1" cy="476.7" r="4.7"/><circle cx="311.6" cy="468.1" r="4.7"/><circle cx="319.0" cy="460.1" r="4.7"/><circle cx="321.6" cy="473.2" r="4.7"/><circle cx="273.8" cy="370.2" r="4.7"/><circle cx="388.8" cy="370.8" r="4.7"/><circle cx="323.2" cy="403.5" r="4.7"/><circle cx="314.3" cy="477.2" r="4.7"/><circle cx="227.5" cy="480.2" r="4.7"/><circle cx="296.2" cy="480.3" r="4.7"/><circle cx="322.2" cy="481.6" r="4.7"/><circle cx="253.4" cy="483.2" r="4.7"/><circle cx="387.0" cy="483.1" r="4.7"/><circle cx="479.9" cy="483.3" r="4.7"/><circle cx="507.3" cy="482.8" r="4.7"/><circle cx="308.0" cy="51.4" r="4.7"/><circle cx="312.8" cy="50.6" r="4.7"/></g>
</svg>
<div style="left:7px;top:741px;width:1082px;height:31px;background:#e6e6e6;border-top:1px solid #cfcfcf;border-bottom:1px solid #cfcfcf"></div>
<div style="left:7px;top:772px;width:1082px;height:21px;background:#ebebeb"></div>
<div style="left:137px;top:742px;width:1px;height:29px;background:#d0d0d0"></div>
<div style="left:337px;top:742px;width:59px;height:29px;background:#fff;border-left:1px solid #d0d0d0;border-right:1px solid #d0d0d0"></div>
<div style="left:427px;top:742px;width:1px;height:29px;background:#d0d0d0"></div>
<div style="left:459px;top:742px;width:1px;height:29px;background:#d0d0d0"></div>
<div style="left:491px;top:742px;width:1px;height:29px;background:#d0d0d0"></div>
<svg style="left:17px;top:750px" width="9" height="12" viewBox="0 0 9 12" fill="none" stroke="#666" stroke-width="1.1"><ellipse cx="4.5" cy="2.6" rx="3.7" ry="1.8"/><path d="M.8 2.6v7c0 1 1.6 1.7 3.7 1.7s3.7-.7 3.7-1.7v-7"/></svg>
<div class="t" style="left:31px;top:749px;color:#777;letter-spacing:-.37px">Data Source</div>
<svg style="left:146px;top:750px" width="12" height="12" viewBox="0 0 12 12" fill="none" stroke="#555" stroke-width="1.1"><rect x=".6" y=".6" width="10.8" height="10.8" rx="1"/><path d="M6 .6v10.8M.6 6h10.8"/></svg>
<div class="t" style="left:162px;top:749px;color:#777;letter-spacing:-.35px">Decorate Your Own Tableau ...</div>
<div class="t" style="left:344px;top:748px;color:#333;font-weight:bold;letter-spacing:-.35px">Sheet 5</div>
<svg style="left:404px;top:749px" width="16" height="16" viewBox="0 0 16 16" fill="none" stroke="#555" stroke-width="1"><path d="M11.5 7V1.5h-10v10H7"/><path d="M4 9V6.5M6.5 9V4M9 9V5.5" /><path d="M11.5 8.5v6M8.5 11.5h6" stroke="#222" stroke-width="1.6"/></svg>
<svg style="left:436px;top:749px" width="16" height="16" viewBox="0 0 16 16" fill="none" stroke="#555" stroke-width="1"><path d="M11.5 7V1.5h-10v10H7M6.5 1.5v10M1.5 6.5h10"/><path d="M11.5 8.5v6M8.5 11.5h6" stroke="#222" stroke-width="1.6"/></svg>
<svg style="left:468px;top:749px" width="16" height="16" viewBox="0 0 16 16" fill="none" stroke="#555" stroke-width="1"><path d="M11.5 7V1.5L6.5 3 1.5 1.5v10l5 1.5M6.5 3v10"/><path d="M11.5 8.5v6M8.5 11.5h6" stroke="#222" stroke-width="1.6"/></svg>
<div class="t" style="left:10px;top:774px;font-size:12px;color:#333;letter-spacing:-.45px">1001 marks</div>
<div class="t" style="left:85px;top:774px;font-size:12px;color:#333;letter-spacing:-.5px">1 row by 1 column</div>
<div style="left:722px;top:772px;width:1px;height:19px;background:#d4d4d4"></div>
<div style="left:849px;top:772px;width:1px;height:19px;background:#d4d4d4"></div>
<div style="left:876px;top:772px;width:1px;height:19px;background:#d4d4d4"></div>
<div style="left:903px;top:772px;width:1px;height:19px;background:#d4d4d4"></div>
<div style="left:950px;top:772px;width:1px;height:19px;background:#d4d4d4"></div>
<div style="left:1021px;top:772px;width:1px;height:19px;background:#d4d4d4"></div>
<svg style="left:729px;top:774px" width="11" height="14" viewBox="0 0 11 14" fill="none" stroke="#555" stroke-width="1.1"><circle cx="5.5" cy="3.4" r="2.4"/><path d="M1 12.8v-2c0-1.5 1.5-2.6 4.5-2.6s4.500 1.100 4.500 2.600v2z"/></svg>
<div class="t" style="left:749px;top:774px;font-size:12.5px;color:#333;letter-spacing:-.4px">Ant Pulley</div>
<svg style="left:834px;top:779px" width="9" height="5" viewBox="0 0 9 5"><path d="M0 0h9L4.500 5z" fill="#222"/></svg>
<svg style="left:957px;top:777px" width="58" height="9" viewBox="0 0 58 9" fill="#c4c4c4"><rect x="2" y="0.500" width="1.200" height="8"/><path d="M9 .5v8L4 4.500z"/><path d="M24 .5v8L19 4.500z"/><path d="M34 .5v8l5-4z"/><path d="M49 .5v8l5-4z"/><rect x="54.800" y=".5" width="1.200" height="8"/></svg>
<svg style="left:1030px;top:776px" width="11" height="11" viewBox="0 0 11 11" fill="#c6c6c6"><rect x="0" y="0" width="3" height="3"/><rect x="0" y="4" width="3" height="3"/><rect x="0" y="8" width="3" height="3"/><rect x="4" y="0" width="3" height="3"/><rect x="4" y="4" width="3" height="3"/><rect x="4" y="8" width="3" height="3"/><rect x="8" y="0" width="3" height="3"/><rect x="8" y="4" width="3" height="3"/><rect x="8" y="8" width="3" height="3"/></svg>
<svg style="left:1051px;top:776px" width="11" height="11" viewBox="0 0 11 11" fill="#bcbcbc"><rect x="0" y="0" width="11" height="7"/><rect x="0" y="8" width="3" height="3"/><rect x="4" y="8" width="3" height="3"/><rect x="8" y="8" width="3" height="3"/></svg>
<div style="left:1072px;top:776px;width:11px;height:11px;background:#666"></div>
</div></div>
</body></html>
